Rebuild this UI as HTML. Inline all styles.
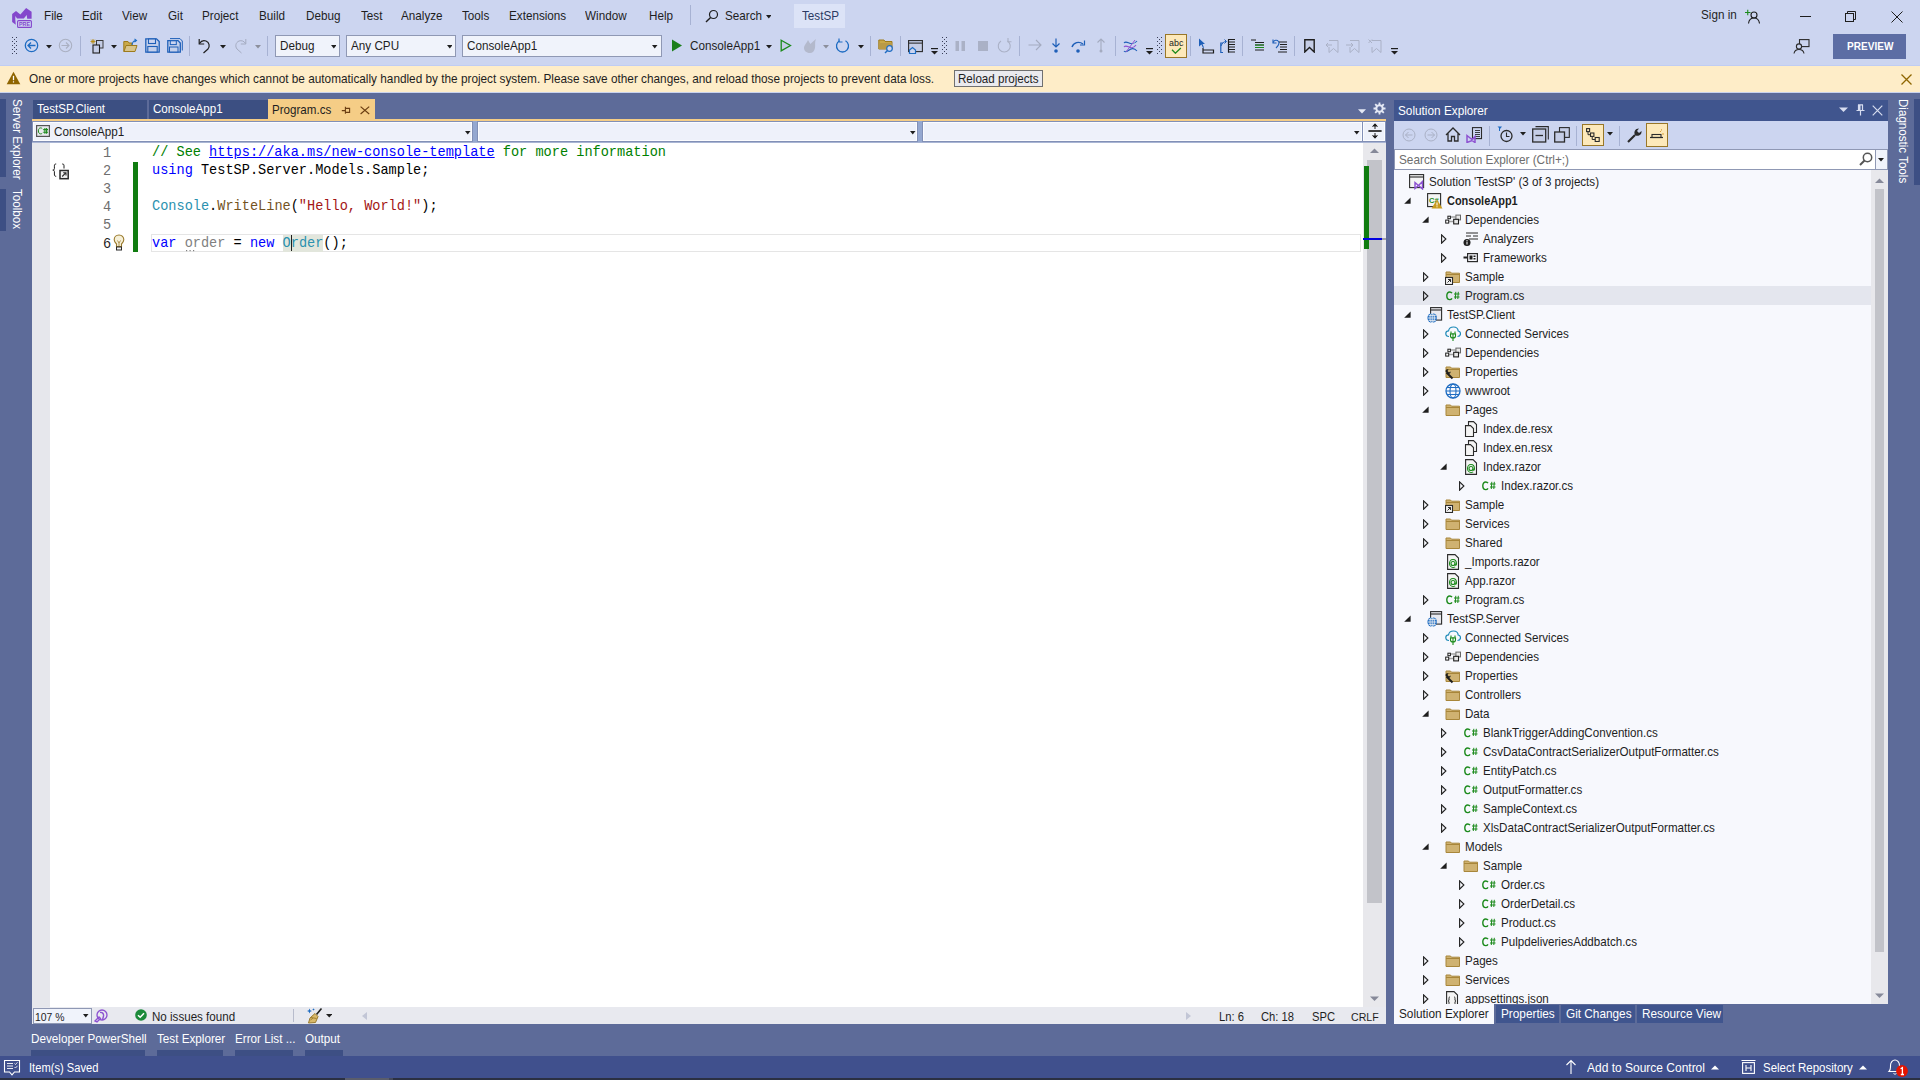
<!DOCTYPE html>
<html><head><meta charset="utf-8">
<style>
*{box-sizing:border-box;margin:0;padding:0}
html,body{width:1920px;height:1080px;overflow:hidden;background:#5d6b99;font-family:"Liberation Sans",sans-serif;font-size:11.6px;color:#1e1e1e}
.r{position:absolute;display:block}
.t{position:absolute;white-space:nowrap}
.code{position:absolute;white-space:pre;font-family:"Liberation Mono",monospace;font-size:14.6px;line-height:18px;transform-origin:0 0;transform:scaleX(0.9315)}
</style></head><body>

<div class="r" style="left:0px;top:0px;width:1920px;height:65px;background:#ccd5f0;"></div>
<div class="r" style="left:0px;top:65px;width:1920px;height:1px;background:#c0cdf3;"></div>
<svg class="r" style="left:12px;top:7px;" width="21" height="22" viewBox="0 0 21 22"><path d="M0.15 7.1L4 4L8.4 7.4L14.1 0.9L19.6 4.8V11.8H15.2L14.7 8.1L11.8 11.5H5.1L3.3 8.9V12.8L3.8 17.7L0.15 14.9Z" fill="#8447cc"/>
<rect x="5.6" y="13.6" width="13.8" height="6.8" rx="1" fill="#ccd5f0" stroke="#8447cc" stroke-width="1.1"/>
<text x="12.5" y="18.9" font-family="Liberation Sans" font-weight="bold" font-size="5.4" fill="#8447cc" text-anchor="middle">PRE</text></svg>
<div class="t" style="left:44.4px;top:7.5px;font-size:12.87px;line-height:16px;color:#1e1e1e;font-weight:normal;transform-origin:0 0;transform:scaleX(0.9091);">File</div>
<div class="t" style="left:82.1px;top:7.5px;font-size:12.87px;line-height:16px;color:#1e1e1e;font-weight:normal;transform-origin:0 0;transform:scaleX(0.9091);">Edit</div>
<div class="t" style="left:121.9px;top:7.5px;font-size:12.87px;line-height:16px;color:#1e1e1e;font-weight:normal;transform-origin:0 0;transform:scaleX(0.9091);">View</div>
<div class="t" style="left:167.5px;top:7.5px;font-size:12.87px;line-height:16px;color:#1e1e1e;font-weight:normal;transform-origin:0 0;transform:scaleX(0.9091);">Git</div>
<div class="t" style="left:202.2px;top:7.5px;font-size:12.87px;line-height:16px;color:#1e1e1e;font-weight:normal;transform-origin:0 0;transform:scaleX(0.9091);">Project</div>
<div class="t" style="left:259.2px;top:7.5px;font-size:12.87px;line-height:16px;color:#1e1e1e;font-weight:normal;transform-origin:0 0;transform:scaleX(0.9091);">Build</div>
<div class="t" style="left:306px;top:7.5px;font-size:12.87px;line-height:16px;color:#1e1e1e;font-weight:normal;transform-origin:0 0;transform:scaleX(0.9091);">Debug</div>
<div class="t" style="left:361.3px;top:7.5px;font-size:12.87px;line-height:16px;color:#1e1e1e;font-weight:normal;transform-origin:0 0;transform:scaleX(0.9091);">Test</div>
<div class="t" style="left:401.2px;top:7.5px;font-size:12.87px;line-height:16px;color:#1e1e1e;font-weight:normal;transform-origin:0 0;transform:scaleX(0.9091);">Analyze</div>
<div class="t" style="left:461.7px;top:7.5px;font-size:12.87px;line-height:16px;color:#1e1e1e;font-weight:normal;transform-origin:0 0;transform:scaleX(0.9091);">Tools</div>
<div class="t" style="left:509.2px;top:7.5px;font-size:12.87px;line-height:16px;color:#1e1e1e;font-weight:normal;transform-origin:0 0;transform:scaleX(0.9091);">Extensions</div>
<div class="t" style="left:585px;top:7.5px;font-size:12.87px;line-height:16px;color:#1e1e1e;font-weight:normal;transform-origin:0 0;transform:scaleX(0.9091);">Window</div>
<div class="t" style="left:649.4px;top:7.5px;font-size:12.87px;line-height:16px;color:#1e1e1e;font-weight:normal;transform-origin:0 0;transform:scaleX(0.9091);">Help</div>
<div class="r" style="left:690px;top:5px;width:1px;height:20px;background:#a7b2d3;"></div>
<svg class="r" style="left:705px;top:9px;" width="14" height="14" viewBox="0 0 14 14"><circle cx="8.5" cy="5.5" r="4" fill="none" stroke="#1e1e1e" stroke-width="1.2"/><path d="M5.6 8.4 L1 13" stroke="#1e1e1e" stroke-width="1.4"/></svg>
<div class="t" style="left:725px;top:7.5px;font-size:12.87px;line-height:16px;color:#1e1e1e;font-weight:normal;transform-origin:0 0;transform:scaleX(0.9091);">Search</div>
<svg class="r" style="left:765.5px;top:15px;" width="5.5" height="4" viewBox="0 0 5.5 4"><path d="M0 0H5.5L2.75 3.5Z" fill="#1e1e1e"/></svg>
<div class="r" style="left:794px;top:4px;width:51px;height:24px;background:#dce3f7;"></div>
<div class="t" style="left:802px;top:7.5px;font-size:12.87px;line-height:16px;color:#2b3a63;font-weight:normal;transform-origin:0 0;transform:scaleX(0.9091);">TestSP</div>
<div class="t" style="left:1701px;top:6.5px;font-size:12.87px;line-height:16px;color:#1e1e1e;font-weight:normal;transform-origin:0 0;transform:scaleX(0.9091);">Sign in</div>
<svg class="r" style="left:1745px;top:9px;" width="15" height="15" viewBox="0 0 15 15"><path d="M0 3.5H5.5M2.75 0.8V6.2" stroke="#1b8a1b" stroke-width="1.1"/><circle cx="9" cy="6" r="3" fill="none" stroke="#1e1e1e" stroke-width="1.1"/><path d="M3.5 14.5 C4 10.5 6 9 9 9 C12 9 14 10.5 14.5 14.5" fill="none" stroke="#1e1e1e" stroke-width="1.1"/></svg>
<div class="r" style="left:1800px;top:16px;width:11px;height:1px;background:#1e1e1e;"></div>
<svg class="r" style="left:1845px;top:11px;" width="12" height="12" viewBox="0 0 12 12"><rect x="0.5" y="2.5" width="8" height="8" fill="none" stroke="#1e1e1e"/><path d="M2.5 2.5V0.5H10.5V8.5H8.5" fill="none" stroke="#1e1e1e"/></svg>
<svg class="r" style="left:1891px;top:11px;" width="12" height="12" viewBox="0 0 12 12"><path d="M0.5 0.5L11.5 11.5M11.5 0.5L0.5 11.5" stroke="#1e1e1e" stroke-width="1"/></svg>
<svg class="r" style="left:12px;top:37px;" width="5" height="17" viewBox="0 0 5 17"><rect x="0" y="0" width="1" height="1" fill="#3a3f58"/><rect x="4" y="0" width="1" height="1" fill="#3a3f58"/><rect x="2" y="2" width="1" height="1" fill="#3a3f58"/><rect x="0" y="4" width="1" height="1" fill="#3a3f58"/><rect x="4" y="4" width="1" height="1" fill="#3a3f58"/><rect x="2" y="6" width="1" height="1" fill="#3a3f58"/><rect x="0" y="8" width="1" height="1" fill="#3a3f58"/><rect x="4" y="8" width="1" height="1" fill="#3a3f58"/><rect x="2" y="10" width="1" height="1" fill="#3a3f58"/><rect x="0" y="12" width="1" height="1" fill="#3a3f58"/><rect x="4" y="12" width="1" height="1" fill="#3a3f58"/><rect x="2" y="14" width="1" height="1" fill="#3a3f58"/><rect x="0" y="16" width="1" height="1" fill="#3a3f58"/><rect x="4" y="16" width="1" height="1" fill="#3a3f58"/></svg>
<svg class="r" style="left:24px;top:38px;" width="15" height="15" viewBox="0 0 15 15"><circle cx="7.5" cy="7.5" r="6.2" fill="none" stroke="#1e6cc2" stroke-width="1.3"/><path d="M4 7.5H11.5M7 4.5L4 7.5L7 10.5" fill="none" stroke="#1e6cc2" stroke-width="1.3"/></svg>
<svg class="r" style="left:46px;top:45px;" width="6" height="4" viewBox="0 0 6 4"><path d="M0 0H6L3.0 3.5Z" fill="#1e1e1e"/></svg>
<svg class="r" style="left:58px;top:38px;" width="15" height="15" viewBox="0 0 15 15"><circle cx="7.5" cy="7.5" r="6.2" fill="none" stroke="#aab0c2" stroke-width="1.1"/><path d="M3.5 7.5H11M8 4.5L11 7.5L8 10.5" fill="none" stroke="#aab0c2" stroke-width="1.1"/></svg>
<div class="r" style="left:80px;top:36px;width:1px;height:20px;background:#a7b2d3;"></div>
<svg class="r" style="left:89px;top:38px;" width="15" height="17" viewBox="0 0 15 17"><path d="M4 1V6M1.5 3.5H6.5M2.2 1.7L5.8 5.3M5.8 1.7L2.2 5.3" stroke="#b58a10" stroke-width="0.9"/><rect x="7.5" y="2.5" width="6.5" height="7.5" fill="#c5cde6" stroke="#3a3a3a"/><rect x="4" y="7" width="6.5" height="8" fill="#c5cde6" stroke="#1e1e1e" stroke-width="1.1"/></svg>
<svg class="r" style="left:111px;top:45px;" width="6" height="4" viewBox="0 0 6 4"><path d="M0 0H6L3.0 3.5Z" fill="#1e1e1e"/></svg>
<svg class="r" style="left:123px;top:38px;" width="15" height="15" viewBox="0 0 15 15"><path d="M0.8 3.5H5L6 5H9V13.5H0.8Z" fill="#c9a94a" stroke="#9d7b1c"/><path d="M1 13.5L3 7.5H14L12 13.5Z" fill="#d8c48a" stroke="#9d7b1c"/><path d="M9 7C9.5 4 11 2.5 13 2.5M11.5 0.8L13.5 2.5L11.5 4.2" fill="none" stroke="#1e6cc2" stroke-width="1.1"/></svg>
<svg class="r" style="left:145px;top:38px;" width="15" height="15" viewBox="0 0 15 15"><path d="M0.8 0.8H11.5L14.2 3.5V14.2H0.8Z" fill="#c5d0ea" stroke="#1e5fb8" stroke-width="1.3"/><rect x="3.5" y="1" width="7" height="4.5" fill="#ccd5f0" stroke="#1e5fb8" stroke-width="1.1"/><rect x="2.8" y="8.5" width="9.4" height="5.5" fill="#c5d0ea" stroke="#1e5fb8" stroke-width="1.1"/></svg>
<svg class="r" style="left:167px;top:38px;" width="16" height="15" viewBox="0 0 16 15"><path d="M3 0.6H13L15.3 3V12.5" fill="none" stroke="#1e5fb8" stroke-width="1"/><path d="M0.8 2.6H11L13.3 5V14.2H0.8Z" fill="#c5d0ea" stroke="#1e5fb8" stroke-width="1.3"/><rect x="3.3" y="2.8" width="6" height="3.8" fill="#ccd5f0" stroke="#1e5fb8" stroke-width="1"/><rect x="2.5" y="9" width="8.5" height="5" fill="#c5d0ea" stroke="#1e5fb8" stroke-width="1"/></svg>
<div class="r" style="left:189px;top:36px;width:1px;height:20px;background:#a7b2d3;"></div>
<svg class="r" style="left:198px;top:38px;" width="14" height="16" viewBox="0 0 14 16"><path d="M1.2 1V6H6.2" fill="none" stroke="#1e1e1e" stroke-width="1.2"/><path d="M1.5 5.5C3 3 5.5 2.2 8 3C11.5 4.5 12 8.5 10 11L5.5 15" fill="none" stroke="#1e1e1e" stroke-width="1.2"/></svg>
<svg class="r" style="left:220px;top:45px;" width="6" height="4" viewBox="0 0 6 4"><path d="M0 0H6L3.0 3.5Z" fill="#1e1e1e"/></svg>
<svg class="r" style="left:233px;top:38px;" width="14" height="16" viewBox="0 0 14 16"><path d="M12.8 1V6H7.8" fill="none" stroke="#a4abc0" stroke-width="1"/><path d="M12.5 5.5C11 3 8.5 2.2 6 3C2.5 4.5 2 8.5 4 11L8.5 15" fill="none" stroke="#a4abc0" stroke-width="1"/></svg>
<svg class="r" style="left:255px;top:45px;" width="6" height="4" viewBox="0 0 6 4"><path d="M0 0H6L3.0 3.5Z" fill="#8c8f9c"/></svg>
<div class="r" style="left:267px;top:36px;width:1px;height:20px;background:#a7b2d3;"></div>
<div class="r" style="left:275px;top:35px;width:65px;height:22px;background:#f0f3fb;border:1px solid #8f98b4"></div>
<div class="t" style="left:279.5px;top:38.0px;font-size:12.87px;line-height:16px;color:#1e1e1e;font-weight:normal;transform-origin:0 0;transform:scaleX(0.9091);">Debug</div>
<svg class="r" style="left:330.5px;top:44.5px;" width="5.5" height="4" viewBox="0 0 5.5 4"><path d="M0 0H5.5L2.75 3.5Z" fill="#1e1e1e"/></svg>
<div class="r" style="left:346px;top:35px;width:110px;height:22px;background:#f0f3fb;border:1px solid #8f98b4"></div>
<div class="t" style="left:350.5px;top:38.0px;font-size:12.87px;line-height:16px;color:#1e1e1e;font-weight:normal;transform-origin:0 0;transform:scaleX(0.9091);">Any CPU</div>
<svg class="r" style="left:446.5px;top:44.5px;" width="5.5" height="4" viewBox="0 0 5.5 4"><path d="M0 0H5.5L2.75 3.5Z" fill="#1e1e1e"/></svg>
<div class="r" style="left:462px;top:35px;width:199.5px;height:22px;background:#f0f3fb;border:1px solid #8f98b4"></div>
<div class="t" style="left:466.5px;top:38.0px;font-size:12.87px;line-height:16px;color:#1e1e1e;font-weight:normal;transform-origin:0 0;transform:scaleX(0.9091);">ConsoleApp1</div>
<svg class="r" style="left:652.0px;top:44.5px;" width="5.5" height="4" viewBox="0 0 5.5 4"><path d="M0 0H5.5L2.75 3.5Z" fill="#1e1e1e"/></svg>
<svg class="r" style="left:671px;top:39px;" width="12" height="13" viewBox="0 0 12 13"><path d="M1 0.5L11 6.5L1 12.5Z" fill="#1b7f1b"/></svg>
<div class="t" style="left:689.5px;top:38.0px;font-size:12.87px;line-height:16px;color:#1e1e1e;font-weight:normal;transform-origin:0 0;transform:scaleX(0.9091);">ConsoleApp1</div>
<svg class="r" style="left:766px;top:45px;" width="6" height="4" viewBox="0 0 6 4"><path d="M0 0H6L3.0 3.5Z" fill="#1e1e1e"/></svg>
<svg class="r" style="left:780px;top:39px;" width="12" height="13" viewBox="0 0 12 13"><path d="M1.2 1.2L10.5 6.5L1.2 11.8Z" fill="#c5cde6" stroke="#1b8a1b" stroke-width="1.3"/></svg>
<svg class="r" style="left:802px;top:38px;" width="15" height="16" viewBox="0 0 15 16"><path d="M8 15C4 15 2 12.5 2 10C2 7 5 5 6 2C7 4 8 5 8.5 6C10 4 12 3 14 1C12.5 4 13.5 7 13 10C12.5 13 10.5 15 8 15Z" fill="#b3b9cc"/></svg>
<svg class="r" style="left:823px;top:45px;" width="6" height="4" viewBox="0 0 6 4"><path d="M0 0H6L3.0 3.5Z" fill="#8c8f9c"/></svg>
<svg class="r" style="left:835px;top:38px;" width="16" height="16" viewBox="0 0 16 16"><path d="M10.5 2.8A6 6 0 1 1 4.5 2.8" fill="none" stroke="#1e6cc2" stroke-width="1.3"/><path d="M4 0.5V4H7.5" fill="none" stroke="#1e6cc2" stroke-width="1.2"/></svg>
<svg class="r" style="left:858px;top:45px;" width="6" height="4" viewBox="0 0 6 4"><path d="M0 0H6L3.0 3.5Z" fill="#1e1e1e"/></svg>
<div class="r" style="left:870px;top:36px;width:1px;height:20px;background:#a7b2d3;"></div>
<svg class="r" style="left:878px;top:38px;" width="17" height="16" viewBox="0 0 17 16"><path d="M0.8 2H6L7 3.5H14V11H0.8Z" fill="#c9a94a" stroke="#9d7b1c"/><rect x="1" y="5" width="13" height="6" fill="#b99a48"/><circle cx="11.5" cy="10.5" r="2.8" fill="#ccd5f0" stroke="#1e6cc2" stroke-width="1.2"/><path d="M9.5 12.5L7 15" stroke="#1e6cc2" stroke-width="1.4"/></svg>
<div class="r" style="left:900px;top:36px;width:1px;height:20px;background:#a7b2d3;"></div>
<svg class="r" style="left:908px;top:40px;" width="16" height="14" viewBox="0 0 16 14"><rect x="0.6" y="0.6" width="13.8" height="11" fill="#c5cde6" stroke="#2b2b2b" stroke-width="1.1"/><rect x="0.6" y="0.6" width="13.8" height="2.5" fill="#ccd5f0" stroke="#2b2b2b" stroke-width="1.1"/><path d="M1.5 13.5V10L4.5 7.5L7.5 10V13.5Z" fill="#ccd5f0" stroke="#1e6cc2" stroke-width="1.2"/></svg>
<svg class="r" style="left:930.5px;top:48px;" width="7" height="7" viewBox="0 0 7 7"><rect x="0" y="0" width="7" height="1.2" fill="#1e1e1e"/><path d="M0 3H7L3.5 6.5Z" fill="#1e1e1e"/></svg>
<svg class="r" style="left:942px;top:37px;" width="5" height="17" viewBox="0 0 5 17"><rect x="0" y="0" width="1" height="1" fill="#3a3f58"/><rect x="4" y="0" width="1" height="1" fill="#3a3f58"/><rect x="2" y="2" width="1" height="1" fill="#3a3f58"/><rect x="0" y="4" width="1" height="1" fill="#3a3f58"/><rect x="4" y="4" width="1" height="1" fill="#3a3f58"/><rect x="2" y="6" width="1" height="1" fill="#3a3f58"/><rect x="0" y="8" width="1" height="1" fill="#3a3f58"/><rect x="4" y="8" width="1" height="1" fill="#3a3f58"/><rect x="2" y="10" width="1" height="1" fill="#3a3f58"/><rect x="0" y="12" width="1" height="1" fill="#3a3f58"/><rect x="4" y="12" width="1" height="1" fill="#3a3f58"/><rect x="2" y="14" width="1" height="1" fill="#3a3f58"/><rect x="0" y="16" width="1" height="1" fill="#3a3f58"/><rect x="4" y="16" width="1" height="1" fill="#3a3f58"/></svg>
<svg class="r" style="left:955px;top:41px;" width="11" height="10" viewBox="0 0 11 10"><rect x="0.5" y="0" width="3.5" height="10" fill="#aab1c6"/><rect x="6.5" y="0" width="3.5" height="10" fill="#aab1c6"/></svg>
<div class="r" style="left:978px;top:41px;width:10px;height:10px;background:#aab1c6;"></div>
<svg class="r" style="left:997px;top:38px;" width="15" height="15" viewBox="0 0 15 15"><path d="M10.5 3A6 6 0 1 1 4 3" fill="none" stroke="#aab1c6" stroke-width="1.1"/><path d="M11 0V3.8H14.5" fill="none" stroke="#aab1c6" stroke-width="1.1"/></svg>
<div class="r" style="left:1019px;top:36px;width:1px;height:20px;background:#a7b2d3;"></div>
<svg class="r" style="left:1028px;top:39px;" width="14" height="12" viewBox="0 0 14 12"><path d="M0.5 6H13M8 1L13 6L8 11" fill="none" stroke="#a4abc0" stroke-width="1.1"/></svg>
<svg class="r" style="left:1051px;top:38px;" width="10" height="16" viewBox="0 0 10 16"><path d="M5 0.5V9M1.5 5.5L5 9L8.5 5.5" fill="none" stroke="#1e5fb8" stroke-width="1.2"/><circle cx="5" cy="13" r="1.8" fill="#1e5fb8"/></svg>
<svg class="r" style="left:1071px;top:39px;" width="15" height="15" viewBox="0 0 15 15"><path d="M1 8C2.5 3.5 8 2 12 5" fill="none" stroke="#1e5fb8" stroke-width="1.4"/><path d="M13.5 1.5V6H9" fill="none" stroke="#1e5fb8" stroke-width="1.2"/><circle cx="7" cy="12" r="1.8" fill="#1e5fb8"/></svg>
<svg class="r" style="left:1096px;top:38px;" width="10" height="16" viewBox="0 0 10 16"><path d="M5 13V1M1.5 4.5L5 1L8.5 4.5" fill="none" stroke="#a4abc0" stroke-width="1.1"/><circle cx="5" cy="13" r="1.5" fill="#a4abc0"/></svg>
<div class="r" style="left:1115px;top:36px;width:1px;height:20px;background:#a7b2d3;"></div>
<svg class="r" style="left:1123px;top:39px;" width="15" height="14" viewBox="0 0 15 14"><path d="M1 4C4 0 8 9 14 2M1 12C4 16 8 5 14 12" fill="none" stroke="#1e5fb8" stroke-width="1.1"/><path d="M1 8C4 4 8 13 13 6" fill="none" stroke="#8d52d1" stroke-width="1.1"/><path d="M3 13L12 1" stroke="#8d52d1" stroke-width="1"/></svg>
<svg class="r" style="left:1146px;top:48px;" width="7" height="7" viewBox="0 0 7 7"><rect x="0" y="0" width="7" height="1.2" fill="#1e1e1e"/><path d="M0 3H7L3.5 6.5Z" fill="#1e1e1e"/></svg>
<svg class="r" style="left:1157px;top:37px;" width="5" height="17" viewBox="0 0 5 17"><rect x="0" y="0" width="1" height="1" fill="#3a3f58"/><rect x="4" y="0" width="1" height="1" fill="#3a3f58"/><rect x="2" y="2" width="1" height="1" fill="#3a3f58"/><rect x="0" y="4" width="1" height="1" fill="#3a3f58"/><rect x="4" y="4" width="1" height="1" fill="#3a3f58"/><rect x="2" y="6" width="1" height="1" fill="#3a3f58"/><rect x="0" y="8" width="1" height="1" fill="#3a3f58"/><rect x="4" y="8" width="1" height="1" fill="#3a3f58"/><rect x="2" y="10" width="1" height="1" fill="#3a3f58"/><rect x="0" y="12" width="1" height="1" fill="#3a3f58"/><rect x="4" y="12" width="1" height="1" fill="#3a3f58"/><rect x="2" y="14" width="1" height="1" fill="#3a3f58"/><rect x="0" y="16" width="1" height="1" fill="#3a3f58"/><rect x="4" y="16" width="1" height="1" fill="#3a3f58"/></svg>
<div class="r" style="left:1165px;top:34px;width:22px;height:24px;background:#fde9ba;border:1px solid #997728"></div>
<div class="t" style="left:1168.5px;top:34.5px;font-size:9.79px;line-height:16px;color:#1e1e1e;font-weight:normal;transform-origin:0 0;transform:scaleX(0.9091);">abc</div>
<svg class="r" style="left:1170px;top:46.5px;" width="12" height="7" viewBox="0 0 12 7"><path d="M2 2.8L5.4 6.2L10.8 1" fill="none" stroke="#1b8a1b" stroke-width="1.3"/></svg>
<div class="r" style="left:1190px;top:36px;width:1px;height:20px;background:#a7b2d3;"></div>
<svg class="r" style="left:1198px;top:38px;" width="17" height="16" viewBox="0 0 17 16"><path d="M1 0.5L7 6H4.5L6 9.5L5 10L3.5 6.5L1 8.5Z" fill="#1e5fb8"/><path d="M5 10V13M5 12H15.5V15H5Z" fill="none" stroke="#1e1e1e" stroke-width="1.2"/></svg>
<svg class="r" style="left:1220px;top:38px;" width="16" height="16" viewBox="0 0 16 16"><path d="M3 5H0.8V14.5H3" fill="none" stroke="#1e5fb8" stroke-width="1.2"/><path d="M1 8C2 5 4 3.5 6 3.5M4.5 1.5L6.5 3.5L4.5 5.5" fill="none" stroke="#1e5fb8" stroke-width="1"/><path d="M8 1.5H15M9 4H15M9 6.5H15M9 9H15M9 11.5H15M8 14H15" stroke="#1e1e1e" stroke-width="1"/><path d="M8.5 1.5V14.5" stroke="#1e1e1e" stroke-width="1.2"/></svg>
<div class="r" style="left:1242px;top:36px;width:1px;height:20px;background:#a7b2d3;"></div>
<svg class="r" style="left:1251px;top:39px;" width="14" height="13" viewBox="0 0 14 13"><path d="M0 1H5M4 3.5H13M4 6H13M4 8.5H13M4 11H13" stroke="#1e1e1e" stroke-width="1"/><path d="M4 6H13M4 8.5H13" stroke="#1b8a1b" stroke-width="1.1"/></svg>
<svg class="r" style="left:1271px;top:38px;" width="17" height="15" viewBox="0 0 17 15"><path d="M2 1.5V5H5.5" fill="none" stroke="#1e5fb8" stroke-width="1.1"/><path d="M2.2 4.5C3 2 6 1.5 7.5 3.5C9 5.5 7 8 5 10" fill="none" stroke="#1e5fb8" stroke-width="1.1"/><path d="M8 4H16M9 6.5H16M9 9H16M9 11.5H16M7 14H16" stroke="#1e1e1e" stroke-width="1"/></svg>
<div class="r" style="left:1294px;top:36px;width:1px;height:20px;background:#a7b2d3;"></div>
<svg class="r" style="left:1304px;top:39px;" width="11" height="14" viewBox="0 0 11 14"><path d="M0.8 0.8H10.2V13L5.5 8.5L0.8 13Z" fill="#c5cde6" stroke="#1e1e1e" stroke-width="1.4"/></svg>
<svg class="r" style="left:1325px;top:39px;" width="14" height="14" viewBox="0 0 14 14"><path d="M4 1.5H13V13.5L8.5 9.5L4 13.5V8" fill="none" stroke="#aab1c6" stroke-width="1"/><path d="M1 6H7M3 4L1 6L3 8" fill="none" stroke="#aab1c6" stroke-width="1"/></svg>
<svg class="r" style="left:1346px;top:39px;" width="14" height="14" viewBox="0 0 14 14"><path d="M4 1.5H13V13.5L8.5 9.5L4 13.5V8" fill="none" stroke="#aab1c6" stroke-width="1"/><path d="M0 6H7M5 4L7 6L5 8" fill="none" stroke="#aab1c6" stroke-width="1"/></svg>
<svg class="r" style="left:1368px;top:39px;" width="14" height="14" viewBox="0 0 14 14"><path d="M4 1.5H13V13.5L8.5 9.5L4 13.5V8" fill="none" stroke="#aab1c6" stroke-width="1"/><path d="M0.5 0.5L4 4M4 0.5L0.5 4" stroke="#aab1c6" stroke-width="1"/></svg>
<svg class="r" style="left:1390.5px;top:48px;" width="7" height="7" viewBox="0 0 7 7"><rect x="0" y="0" width="7" height="1.2" fill="#1e1e1e"/><path d="M0 3H7L3.5 6.5Z" fill="#1e1e1e"/></svg>
<svg class="r" style="left:1793px;top:39px;" width="17" height="15" viewBox="0 0 17 15"><rect x="6.5" y="0.6" width="9.5" height="7" fill="none" stroke="#2b2b2b" stroke-width="1.1"/><circle cx="6" cy="7.5" r="2.6" fill="#ccd5f0" stroke="#2b2b2b" stroke-width="1.1"/><path d="M1 14.5C1.5 11.5 3.5 10.5 6 10.5C8.5 10.5 10.5 11.5 11 14.5" fill="none" stroke="#2b2b2b" stroke-width="1.1"/></svg>
<div class="r" style="left:1833px;top:34px;width:73px;height:25px;background:#5c6da4;"></div>
<div class="t" style="left:1846.5px;top:38.0px;font-size:11.07px;line-height:16px;color:#ffffff;font-weight:bold;transform-origin:0 0;transform:scaleX(0.9091);">PREVIEW</div>
<div class="r" style="left:0px;top:66px;width:1920px;height:26px;background:#feedc8;"></div>
<div class="r" style="left:0px;top:92px;width:1920px;height:1px;background:#c9d3ee;"></div>
<svg class="r" style="left:6px;top:71px;" width="15" height="14" viewBox="0 0 15 14"><path d="M7.5 0.8L14.3 13.2H0.7Z" fill="#8f6500"/><path d="M7.5 4.8V9.2" stroke="#ffffff" stroke-width="1.3"/><rect x="6.9" y="10.3" width="1.2" height="1.2" fill="#ffffff"/></svg>
<div class="t" style="left:28.5px;top:70.5px;font-size:12.98px;line-height:16px;color:#1e1e1e;font-weight:normal;transform-origin:0 0;transform:scaleX(0.9091);">One or more projects have changes which cannot be automatically handled by the project system. Please save other changes, and reload those projects to prevent data loss.</div>
<div class="r" style="left:954px;top:70px;width:89px;height:17px;background:#eaeaee;border:1px solid #707070"></div>
<div class="t" style="left:958px;top:70.5px;font-size:12.76px;line-height:16px;color:#1e1e1e;font-weight:normal;transform-origin:0 0;transform:scaleX(0.9091);">Reload projects</div>
<svg class="r" style="left:1901px;top:74px;" width="11" height="11" viewBox="0 0 11 11"><path d="M0.5 0.5L10.5 10.5M10.5 0.5L0.5 10.5" stroke="#8f6500" stroke-width="1.3"/></svg>
<div class="r" style="left:0px;top:99px;width:6px;height:78px;background:#3d4f84;"></div>
<div class="r" style="left:0px;top:189px;width:6px;height:42px;background:#3d4f84;"></div>
<div class="t" style="left:10px;top:99px;font-size:12.76px;line-height:14px;color:#ffffff;transform-origin:0 0;transform:translateX(14px) rotate(90deg) scaleX(0.9091)">Server Explorer</div>
<div class="t" style="left:10px;top:189px;font-size:12.76px;line-height:14px;color:#ffffff;transform-origin:0 0;transform:translateX(14px) rotate(90deg) scaleX(0.9091)">Toolbox</div>
<div class="t" style="left:1896px;top:99px;font-size:12.76px;line-height:14px;color:#ffffff;transform-origin:0 0;transform:translateX(14px) rotate(90deg) scaleX(0.9091)">Diagnostic Tools</div>
<div class="r" style="left:1914px;top:99px;width:6px;height:86px;background:#3d4f84;"></div>
<div class="r" style="left:32.5px;top:100px;width:114.5px;height:18.5px;background:#3c4f82;"></div>
<div class="t" style="left:37px;top:100.5px;font-size:12.76px;line-height:16px;color:#ffffff;font-weight:normal;transform-origin:0 0;transform:scaleX(0.9091);">TestSP.Client</div>
<div class="r" style="left:149px;top:100px;width:118.5px;height:18.5px;background:#3c4f82;"></div>
<div class="t" style="left:153px;top:100.5px;font-size:12.76px;line-height:16px;color:#ffffff;font-weight:normal;transform-origin:0 0;transform:scaleX(0.9091);">ConsoleApp1</div>
<div class="r" style="left:268px;top:99px;width:107px;height:20px;background:#f5cd86;"></div>
<div class="t" style="left:272px;top:102.0px;font-size:12.76px;line-height:16px;color:#1e1e1e;font-weight:normal;transform-origin:0 0;transform:scaleX(0.9091);">Program.cs</div>
<svg class="r" style="left:341px;top:106px;" width="10" height="9" viewBox="0 0 10 9"><path d="M0.8 4.6H4.4M4.4 0.8V7.8M4.4 2.4H8.6V6.4H4.4" fill="none" stroke="#6b3e12" stroke-width="1.1"/></svg>
<svg class="r" style="left:360px;top:105.5px;" width="10" height="9" viewBox="0 0 10 9"><path d="M0.6 0.6L9.2 8M9.2 0.6L0.6 8" stroke="#6b3e12" stroke-width="1.2"/></svg>
<svg class="r" style="left:1358px;top:108.5px;" width="8" height="5" viewBox="0 0 8 5"><path d="M0 0.3H8L4 4.5Z" fill="#e5e9f5"/></svg>
<svg class="r" style="left:1373px;top:102px;" width="13" height="13" viewBox="0 0 13 13"><circle cx="6.5" cy="6.5" r="3.2" fill="none" stroke="#e5e9f5" stroke-width="2"/><path d="M6.5 0.5V3M6.5 10V12.5M0.5 6.5H3M10 6.5H12.5M2.2 2.2L4 4M9 9L10.8 10.8M2.2 10.8L4 9M9 4L10.8 2.2" stroke="#e5e9f5" stroke-width="1.8"/></svg>
<div class="r" style="left:32px;top:119px;width:1354px;height:2px;background:#f5cd86;"></div>
<div class="r" style="left:32px;top:121px;width:1354px;height:22px;background:#a9b5d4;"></div>
<div class="r" style="left:32px;top:121px;width:441px;height:21px;background:#eef1fa;border:1px solid #8290b6;box-shadow:inset 0 0 0 1px #fbfcff"></div>
<div class="r" style="left:477px;top:121px;width:441px;height:21px;background:#eef1fa;border:1px solid #8290b6;box-shadow:inset 0 0 0 1px #fbfcff"></div>
<div class="r" style="left:922px;top:121px;width:441px;height:21px;background:#eef1fa;border:1px solid #8290b6;box-shadow:inset 0 0 0 1px #fbfcff"></div>
<div class="r" style="left:473px;top:121px;width:4px;height:21px;background:#95a8d0;"></div>
<div class="r" style="left:918px;top:121px;width:4px;height:21px;background:#95a8d0;"></div>
<div class="r" style="left:1363px;top:121px;width:23px;height:21px;background:#eef1fa;border:1px solid #8290b6;border-left:none;box-shadow:inset 0 0 0 1px #fbfcff"></div>
<svg class="r" style="left:36px;top:125px;" width="14" height="12" viewBox="0 0 14 12"><rect x="0.6" y="0.6" width="12.8" height="10.8" fill="#e9e9ef" stroke="#555" stroke-width="1.2"/><path d="M6.2 3.6C5.8 3.1 5.2 2.9 4.6 2.9C3.2 2.9 2.4 4.1 2.4 5.9C2.4 7.7 3.2 8.9 4.6 8.9C5.2 8.9 5.8 8.7 6.2 8.2" fill="none" stroke="#1b8a1b" stroke-width="1"/><path d="M7.2 4.6H12M7.2 7.3H12M8.9 3V8.8M10.6 3V8.8" stroke="#1b8a1b" stroke-width="1.05"/></svg>
<div class="t" style="left:53.5px;top:123.5px;font-size:12.87px;line-height:16px;color:#1e1e1e;font-weight:normal;transform-origin:0 0;transform:scaleX(0.9091);">ConsoleApp1</div>
<svg class="r" style="left:465px;top:131px;" width="5.5" height="4" viewBox="0 0 5.5 4"><path d="M0 0H5.5L2.75 3.5Z" fill="#1e1e1e"/></svg>
<svg class="r" style="left:910px;top:131px;" width="5.5" height="4" viewBox="0 0 5.5 4"><path d="M0 0H5.5L2.75 3.5Z" fill="#1e1e1e"/></svg>
<svg class="r" style="left:1354px;top:131px;" width="5.5" height="4" viewBox="0 0 5.5 4"><path d="M0 0H5.5L2.75 3.5Z" fill="#1e1e1e"/></svg>
<svg class="r" style="left:1368px;top:123px;" width="14" height="16" viewBox="0 0 14 16"><path d="M0.5 8H13.5" stroke="#1e1e1e" stroke-width="1.2"/><path d="M7 1V6M7 10V15" stroke="#1e1e1e" stroke-width="1"/><path d="M4.5 3.5L7 0.8L9.5 3.5M4.5 12.5L7 15.2L9.5 12.5" fill="#1e1e1e" stroke="#1e1e1e"/><path d="M0.5 8H13.5" stroke="#1e1e1e" stroke-width="1.2"/></svg>
<div class="r" style="left:32px;top:143px;width:1331px;height:864px;background:#ffffff;"></div>
<div class="r" style="left:32px;top:143px;width:18px;height:864px;background:#e6e7ec;"></div>
<div class="r" style="left:1363px;top:143px;width:23px;height:864px;background:#e8e8ec;"></div>
<svg class="r" style="left:1370px;top:148px;" width="9" height="6" viewBox="0 0 9 6"><path d="M0 5H9L4.5 0.5Z" fill="#868999"/></svg>
<div class="r" style="left:1367px;top:160px;width:15px;height:743px;background:#c2c3c9;"></div>
<svg class="r" style="left:1370px;top:996px;" width="9" height="6" viewBox="0 0 9 6"><path d="M0 0.5H9L4.5 5Z" fill="#868999"/></svg>
<div class="r" style="left:1364px;top:166px;width:4.5px;height:83px;background:#107c10;"></div>
<div class="r" style="left:1363px;top:238px;width:23px;height:2px;background:#0000e0;"></div>
<div class="r" style="left:1382px;top:238px;width:4px;height:2px;background:#a0a0a8;"></div>
<svg class="r" style="left:52px;top:163px;" width="18" height="18" viewBox="0 0 18 18"><path d="M4.2 1C2.6 1 2.4 1.6 2.4 3.2V5.6C2.4 6.6 1.9 7.1 0.8 7.1C1.9 7.1 2.4 7.6 2.4 8.6V11C2.4 12.6 2.6 13.3 4.2 13.3" fill="none" stroke="#1e1e1e" stroke-width="1"/><path d="M10.2 1C11.6 1 12 1.4 12 2.8V5.5" fill="none" stroke="#1e1e1e" stroke-width="1"/><rect x="8" y="7.5" width="8.2" height="8.2" fill="#f2f2f2" stroke="#2b2b2b" stroke-width="1.5"/><path d="M10.2 13.5L14 9.7M11.2 9.7H14V12.5" fill="none" stroke="#2b2b2b" stroke-width="1.1"/></svg>
<div class="code" style="left:100px;top:144.0px;width:12px;text-align:right;color:#6e6e6e">1</div>
<div class="code" style="left:100px;top:162.0px;width:12px;text-align:right;color:#6e6e6e">2</div>
<div class="code" style="left:100px;top:180.0px;width:12px;text-align:right;color:#6e6e6e">3</div>
<div class="code" style="left:100px;top:197.5px;width:12px;text-align:right;color:#6e6e6e">4</div>
<div class="code" style="left:100px;top:216.0px;width:12px;text-align:right;color:#6e6e6e">5</div>
<div class="code" style="left:100px;top:235.0px;width:12px;text-align:right;color:#1e1e1e">6</div>
<div class="r" style="left:133px;top:162px;width:5px;height:90px;background:#107c10;"></div>
<div class="r" style="left:151px;top:233.5px;width:1210px;height:18.5px;background:transparent;border:1.5px solid #e5e5e5"></div>
<svg class="r" style="left:113px;top:234px;" width="12" height="17" viewBox="0 0 12 17"><path d="M6 1C3 1 1.2 3.2 1.2 5.7C1.2 7.6 2.5 9 3.5 10V12.5H8.5V10C9.5 9 10.8 7.6 10.8 5.7C10.8 3.2 9 1 6 1Z" fill="#f6f0d8" stroke="#9a7a2c" stroke-width="1.1"/><path d="M4.5 6.5L6 9V12M7.5 6.5L6 9" fill="none" stroke="#9a7a2c" stroke-width="0.8"/><rect x="3.5" y="13" width="5" height="3" fill="#f4f4f4" stroke="#2b2b2b" stroke-width="1"/></svg>
<div class="r" style="left:282.5px;top:234.5px;width:40.5px;height:17px;background:#e2e6dc;"></div>
<div class="r" style="left:290.5px;top:235px;width:1.2px;height:16px;background:#1e1e1e;"></div>
<div class="code" style="left:151.5px;top:143.0px;color:#000000"><span style="color:#008000">// See </span><span style="color:#0000ff;text-decoration:underline">https://aka.ms/new-console-template</span><span style="color:#008000"> for more information</span></div>
<div class="code" style="left:151.5px;top:161.0px;color:#000000"><span style="color:#0000ff">using</span> TestSP.Server.Models.Sample;</div>
<div class="code" style="left:151.5px;top:179.0px;color:#000000"></div>
<div class="code" style="left:151.5px;top:197.0px;color:#000000"><span style="color:#2b91af">Console</span>.<span style="color:#74531f">WriteLine</span>(<span style="color:#a31515">"Hello, World!"</span>);</div>
<div class="code" style="left:151.5px;top:215.5px;color:#000000"></div>
<div class="code" style="left:151.5px;top:233.5px;color:#000000"><span style="color:#0000ff">var</span> <span style="color:#808080">order</span> = <span style="color:#0000ff">new</span> <span style="color:#2b91af">Order</span>();</div>
<svg class="r" style="left:186px;top:250px;" width="12" height="2" viewBox="0 0 12 2"><rect x="0" y="0" width="1.2" height="1.2" fill="#808080"/><rect x="3.5" y="0" width="1.2" height="1.2" fill="#808080"/><rect x="7" y="0" width="1.2" height="1.2" fill="#808080"/></svg>
<div class="r" style="left:32px;top:1007px;width:1331px;height:17px;background:#e8e9ef;"></div>
<div class="r" style="left:1363px;top:1007px;width:23px;height:17px;background:#e8e9ef;"></div>
<div class="r" style="left:32.5px;top:1007.5px;width:59px;height:16px;background:#f0f3fb;border:1px solid #8f98b4"></div>
<div class="t" style="left:35px;top:1008.5px;font-size:11.44px;line-height:16px;color:#1e1e1e;font-weight:normal;transform-origin:0 0;transform:scaleX(0.9091);">107 %</div>
<svg class="r" style="left:83px;top:1014px;" width="5.5" height="4" viewBox="0 0 5.5 4"><path d="M0 0H5.5L2.75 3.5Z" fill="#1e1e1e"/></svg>
<svg class="r" style="left:94px;top:1009px;" width="14" height="14" viewBox="0 0 14 14"><circle cx="8" cy="6" r="5" fill="none" stroke="#8d52d1" stroke-width="1.3"/><path d="M6 3.5C8 3 10 4.5 9.5 7L8.5 11M1 12L5 8L6.5 9.5L3 13Z" fill="none" stroke="#8d52d1" stroke-width="1.4"/></svg>
<svg class="r" style="left:134.5px;top:1009px;" width="12" height="12" viewBox="0 0 12 12"><circle cx="6" cy="6" r="5.8" fill="#1b8a3a"/><path d="M3 6.2L5.2 8.3L9 4.2" fill="none" stroke="#ffffff" stroke-width="1.5"/></svg>
<div class="t" style="left:151.5px;top:1008.5px;font-size:12.76px;line-height:16px;color:#1e1e1e;font-weight:normal;transform-origin:0 0;transform:scaleX(0.9091);">No issues found</div>
<div class="r" style="left:293px;top:1009px;width:1px;height:13px;background:#b8bccc;"></div>
<svg class="r" style="left:306px;top:1007px;" width="17" height="17" viewBox="0 0 17 17"><path d="M3.5 1.5L4.2 3.3L6 4L4.2 4.7L3.5 6.5L2.8 4.7L1 4L2.8 3.3Z" fill="#1e6cc2"/><path d="M7.5 1.2L7.9 2.1L8.8 2.5L7.9 2.9L7.5 3.8L7.1 2.9L6.2 2.5L7.1 2.1Z" fill="#1e6cc2"/><path d="M15.5 1.5L10.5 7.5" stroke="#1e1e1e" stroke-width="1.6"/><path d="M9 6.5L12 9.5L9.5 15.5L2.5 16L4 11Z" fill="#d9b96a" stroke="#9a7a2c" stroke-width="1"/><path d="M5 10.5L10.5 11.5M4.5 13L7 11" stroke="#9a7a2c" stroke-width="0.9"/></svg>
<svg class="r" style="left:325.5px;top:1014px;" width="6.5" height="4" viewBox="0 0 6.5 4"><path d="M0 0H6.5L3.25 3.5Z" fill="#1e1e1e"/></svg>
<svg class="r" style="left:362px;top:1012px;" width="5" height="8" viewBox="0 0 5 8"><path d="M5 0V8L0 4Z" fill="#c2c6d6"/></svg>
<svg class="r" style="left:1186px;top:1012px;" width="5" height="8" viewBox="0 0 5 8"><path d="M0 0V8L5 4Z" fill="#c2c6d6"/></svg>
<div class="t" style="left:1219px;top:1008.5px;font-size:12.32px;line-height:16px;color:#1e1e1e;font-weight:normal;transform-origin:0 0;transform:scaleX(0.9091);">Ln: 6</div>
<div class="t" style="left:1261px;top:1008.5px;font-size:12.32px;line-height:16px;color:#1e1e1e;font-weight:normal;transform-origin:0 0;transform:scaleX(0.9091);">Ch: 18</div>
<div class="t" style="left:1312px;top:1008.5px;font-size:12.32px;line-height:16px;color:#1e1e1e;font-weight:normal;transform-origin:0 0;transform:scaleX(0.9091);">SPC</div>
<div class="t" style="left:1351px;top:1008.5px;font-size:11.66px;line-height:16px;color:#1e1e1e;font-weight:normal;transform-origin:0 0;transform:scaleX(0.9091);">CRLF</div>
<div class="t" style="left:31px;top:1030.5px;font-size:12.87px;line-height:16px;color:#ffffff;font-weight:normal;transform-origin:0 0;transform:scaleX(0.9091);">Developer PowerShell</div>
<div class="r" style="left:31px;top:1050px;width:114px;height:6px;background:#3d4f84;"></div>
<div class="t" style="left:157px;top:1030.5px;font-size:12.87px;line-height:16px;color:#ffffff;font-weight:normal;transform-origin:0 0;transform:scaleX(0.9091);">Test Explorer</div>
<div class="r" style="left:157px;top:1050px;width:66px;height:6px;background:#3d4f84;"></div>
<div class="t" style="left:235px;top:1030.5px;font-size:12.87px;line-height:16px;color:#ffffff;font-weight:normal;transform-origin:0 0;transform:scaleX(0.9091);">Error List ...</div>
<div class="r" style="left:235px;top:1050px;width:58px;height:6px;background:#3d4f84;"></div>
<div class="t" style="left:305px;top:1030.5px;font-size:12.87px;line-height:16px;color:#ffffff;font-weight:normal;transform-origin:0 0;transform:scaleX(0.9091);">Output</div>
<div class="r" style="left:305px;top:1050px;width:38px;height:6px;background:#3d4f84;"></div>
<div class="r" style="left:1394px;top:100px;width:494px;height:21px;background:#40558e;"></div>
<div class="t" style="left:1398px;top:103.0px;font-size:12.98px;line-height:16px;color:#ffffff;font-weight:normal;transform-origin:0 0;transform:scaleX(0.9091);">Solution Explorer</div>
<svg class="r" style="left:1839px;top:107px;" width="9" height="6" viewBox="0 0 9 6"><path d="M0 0.5H9L4.5 5Z" fill="#d7ddf0"/></svg>
<svg class="r" style="left:1856px;top:104px;" width="9" height="12" viewBox="0 0 9 12"><path d="M2 0.8H7M2.5 0.8V6M6.5 0.8V6M0.5 6.5H8.5M4.5 6.5V11.5" fill="none" stroke="#d7ddf0" stroke-width="1.2"/><rect x="2.5" y="1" width="2" height="5" fill="#d7ddf0"/></svg>
<svg class="r" style="left:1872px;top:104.5px;" width="11" height="11" viewBox="0 0 11 11"><path d="M0.7 0.7L10.3 10.3M10.3 0.7L0.7 10.3" stroke="#d7ddf0" stroke-width="1.2"/></svg>
<div class="r" style="left:1394px;top:121px;width:494px;height:28px;background:#ccd5f0;"></div>
<svg class="r" style="left:1402px;top:128px;" width="14" height="14" viewBox="0 0 14 14"><circle cx="7" cy="7" r="6" fill="none" stroke="#aab1c6" stroke-width="1"/><path d="M3.5 7H10.5M6.5 4L3.5 7L6.5 10" fill="none" stroke="#aab1c6" stroke-width="1"/></svg>
<svg class="r" style="left:1424px;top:128px;" width="14" height="14" viewBox="0 0 14 14"><circle cx="7" cy="7" r="6" fill="none" stroke="#aab1c6" stroke-width="1"/><path d="M3.5 7H10.5M7.5 4L10.5 7L7.5 10" fill="none" stroke="#aab1c6" stroke-width="1"/></svg>
<svg class="r" style="left:1445px;top:127px;" width="16" height="15" viewBox="0 0 16 15"><path d="M1 8L8 1L15 8M3 6.5V14H6.5V9.5H9.5V14H13V6.5" fill="none" stroke="#2b2b2b" stroke-width="1.3"/></svg>
<svg class="r" style="left:1466px;top:127px;" width="17" height="16" viewBox="0 0 17 16"><rect x="6.5" y="0.6" width="9" height="11" fill="#ccd5f0" stroke="#2b2b2b" stroke-width="1.1"/><path d="M9 3.5H14M9 5.5H14M9 7.5H14M9 9.5H14" stroke="#2b2b2b" stroke-width="0.9"/><path d="M1 8.5L6 12.5L9 9.5V15.5L6 13.5L1 15.5Z" fill="none" stroke="#8d52d1" stroke-width="1.5"/></svg>
<div class="r" style="left:1489px;top:126px;width:1px;height:20px;background:#a7b2d3;"></div>
<svg class="r" style="left:1497px;top:126px;" width="16" height="17" viewBox="0 0 16 17"><path d="M0.5 0.5H5L3 3Z" fill="#1e6cc2"/><path d="M2.5 2V5" stroke="#1e6cc2" stroke-width="1"/><circle cx="9.5" cy="10" r="5.5" fill="#ccd5f0" stroke="#2b2b2b" stroke-width="1.3"/><path d="M9.5 6.5V10.5H12.5" fill="none" stroke="#2b2b2b" stroke-width="1.1"/></svg>
<svg class="r" style="left:1520px;top:132px;" width="6" height="4" viewBox="0 0 6 4"><path d="M0 0H6L3 3.5Z" fill="#1e1e1e"/></svg>
<svg class="r" style="left:1532px;top:126px;" width="17" height="17" viewBox="0 0 17 17"><path d="M3.5 0.6H16.3V13.5" fill="none" stroke="#2b2b2b" stroke-width="1.1"/><rect x="0.7" y="3" width="13" height="13" fill="#c5cde6" stroke="#2b2b2b" stroke-width="1.3"/><path d="M3.5 9.5H11" stroke="#2b2b2b" stroke-width="1.3"/></svg>
<svg class="r" style="left:1554px;top:127px;" width="16" height="16" viewBox="0 0 16 16"><rect x="5.5" y="0.6" width="9.8" height="9.8" fill="#c5cde6" stroke="#2b2b2b" stroke-width="1.1"/><rect x="0.7" y="5" width="9.8" height="10" fill="#c5cde6" stroke="#2b2b2b" stroke-width="1.3"/></svg>
<div class="r" style="left:1576px;top:126px;width:1px;height:20px;background:#a7b2d3;"></div>
<div class="r" style="left:1582px;top:124px;width:22px;height:22px;background:#fde9ba;border:1px solid #997728"></div>
<svg class="r" style="left:1586px;top:128px;" width="14" height="14" viewBox="0 0 14 14"><rect x="0.6" y="0.6" width="3" height="3" fill="none" stroke="#2b2b2b" stroke-width="1.1"/><rect x="4.5" y="5" width="3.4" height="3.4" fill="none" stroke="#2b2b2b" stroke-width="1.1"/><rect x="9.2" y="9.5" width="4" height="4" fill="none" stroke="#2b2b2b" stroke-width="1.1"/><path d="M2 3.6V6.7H4.5M6.2 8.4V11.5H9.2" fill="none" stroke="#2b2b2b" stroke-width="1"/></svg>
<svg class="r" style="left:1607px;top:132px;" width="6" height="4" viewBox="0 0 6 4"><path d="M0 0H6L3 3.5Z" fill="#1e1e1e"/></svg>
<div class="r" style="left:1619px;top:126px;width:1px;height:20px;background:#a7b2d3;"></div>
<svg class="r" style="left:1627px;top:127px;" width="16" height="16" viewBox="0 0 16 16"><path d="M1 15L8 8" stroke="#2b2b2b" stroke-width="2.2"/><path d="M8 8C6.5 5 8 1.5 12 1.5L10 4L12 6L14.5 4C15 8 11.5 9.5 8.5 8.5" fill="#2b2b2b"/></svg>
<div class="r" style="left:1646px;top:123px;width:22px;height:24px;background:#fde9ba;border:1px solid #997728"></div>
<svg class="r" style="left:1649px;top:129px;" width="16" height="12" viewBox="0 0 16 12"><path d="M1 8.5H14" stroke="#2b2b2b" stroke-width="1.2"/><rect x="3" y="5.5" width="9" height="3" fill="none" stroke="#2b2b2b" stroke-width="1.1"/><path d="M11 3L12.5 1.5M13 5H15M12 0.5L13 0" stroke="#d8a03a" stroke-width="1"/></svg>
<div class="r" style="left:1394px;top:149px;width:494px;height:21px;background:#ffffff;border:1px solid #8f98b4"></div>
<div class="t" style="left:1399px;top:152.0px;font-size:12.98px;line-height:16px;color:#6d6d6d;font-weight:normal;transform-origin:0 0;transform:scaleX(0.9091);">Search Solution Explorer (Ctrl+;)</div>
<svg class="r" style="left:1859px;top:152px;" width="14" height="14" viewBox="0 0 14 14"><circle cx="8.5" cy="5.5" r="4.2" fill="none" stroke="#555" stroke-width="1.5"/><path d="M5.5 8.5L1 13" stroke="#555" stroke-width="2"/></svg>
<div class="r" style="left:1875px;top:149px;width:1px;height:21px;background:#8f98b4;"></div>
<div class="r" style="left:1876px;top:150px;width:11px;height:19px;background:#f0f3fb;"></div>
<svg class="r" style="left:1878px;top:158px;" width="6" height="4" viewBox="0 0 6 4"><path d="M0 0H6L3 3.5Z" fill="#1e1e1e"/></svg>
<div class="r" style="left:1394px;top:170px;width:494px;height:834px;background:#f7f8fd;"></div>
<div class="r" style="left:1871px;top:170px;width:17px;height:834px;background:#e8e8ec;"></div>
<svg class="r" style="left:1875px;top:178px;" width="9" height="6" viewBox="0 0 9 6"><path d="M0 5H9L4.5 0.5Z" fill="#868999"/></svg>
<div class="r" style="left:1875px;top:189px;width:9px;height:763px;background:#c2c3c9;"></div>
<svg class="r" style="left:1875px;top:993px;" width="9" height="6" viewBox="0 0 9 6"><path d="M0 0.5H9L4.5 5Z" fill="#868999"/></svg>
<div class="r" style="left:1394px;top:286px;width:477px;height:19px;background:#e4e6ee;"></div>
<div class="r" style="left:1394px;top:170px;width:477px;height:834px;overflow:hidden">
<svg class="r" style="left:15px;top:3.5px" width="16" height="16" viewBox="0 0 16 16"><rect x="0.6" y="0.6" width="14" height="13" fill="#f4f4f4" stroke="#2b2b2b" stroke-width="1.1"/><path d="M0.6 3H14.6" stroke="#2b2b2b" stroke-width="1.1"/><path d="M6 8.5L9.5 11.5L13.5 7.5V15L9.5 11.5L6 14.5Z" fill="none" stroke="#8d52d1" stroke-width="1.4"/></svg>
<div class="t" style="left:35px;top:4px;font-size:12.76px;line-height:16px;font-weight:normal;transform-origin:0 0;transform:scaleX(0.9091)">Solution 'TestSP' (3 of 3 projects)</div>
<svg class="r" style="left:10px;top:27px" width="7" height="7" viewBox="0 0 7 7"><path d="M6.6 0.4V6.8H0.2Z" fill="#1e1e1e"/></svg>
<svg class="r" style="left:33px;top:22.5px" width="16" height="16" viewBox="0 0 16 16"><rect x="0.6" y="0.6" width="13" height="13" fill="#f4f4f4" stroke="#2b2b2b" stroke-width="1.1"/><text x="2" y="10" font-family="Liberation Sans" font-weight="bold" font-size="7.5" fill="#1b8a1b">C#</text><path d="M10 6.5L15.5 15.5H4.5Z" fill="#c89b1e"/><path d="M10 9.5V12.5" stroke="#fff" stroke-width="1"/><rect x="9.5" y="13.3" width="1" height="1" fill="#fff"/></svg>
<div class="t" style="left:53px;top:23px;font-size:12.07px;line-height:16px;font-weight:bold;transform-origin:0 0;transform:scaleX(0.9091)">ConsoleApp1</div>
<svg class="r" style="left:28px;top:46px" width="7" height="7" viewBox="0 0 7 7"><path d="M6.6 0.4V6.8H0.2Z" fill="#1e1e1e"/></svg>
<svg class="r" style="left:51px;top:41.5px" width="16" height="16" viewBox="0 0 16 16"><path d="M5.4 5H10.5M3.8 9.5H8.2" stroke="#a0a0a0" stroke-width="1.3"/><rect x="10.9" y="3.1" width="4.6" height="4.8" fill="#e8e8e8" stroke="#666" stroke-width="1"/><rect x="0.7" y="8.1" width="3" height="3" fill="#fff" stroke="#1e1e1e" stroke-width="1"/><rect x="2.9" y="4.2" width="2.5" height="2.5" fill="#fff" stroke="#1e1e1e" stroke-width="1"/><rect x="8.7" y="7.3" width="4.8" height="4.6" fill="#e8e8e8" stroke="#1e1e1e" stroke-width="1.1"/></svg>
<div class="t" style="left:71px;top:42px;font-size:12.76px;line-height:16px;font-weight:normal;transform-origin:0 0;transform:scaleX(0.9091)">Dependencies</div>
<svg class="r" style="left:47px;top:63.5px" width="7" height="10" viewBox="0 0 7 10"><path d="M0.6 0.8L4.9 5L0.6 9.2Z" fill="none" stroke="#1e1e1e" stroke-width="1.1"/></svg>
<svg class="r" style="left:69px;top:60.5px" width="16" height="16" viewBox="0 0 16 16"><path d="M3 2H15M3 5H8M10 5H15M6 8H15" stroke="#2b2b2b" stroke-width="1"/><circle cx="4" cy="11.5" r="3.5" fill="#1e1e1e"/><rect x="3.5" y="10.5" width="1" height="3" fill="#fff"/><rect x="3.5" y="9" width="1" height="1" fill="#fff"/></svg>
<div class="t" style="left:89px;top:61px;font-size:12.76px;line-height:16px;font-weight:normal;transform-origin:0 0;transform:scaleX(0.9091)">Analyzers</div>
<svg class="r" style="left:47px;top:82.5px" width="7" height="10" viewBox="0 0 7 10"><path d="M0.6 0.8L4.9 5L0.6 9.2Z" fill="none" stroke="#1e1e1e" stroke-width="1.1"/></svg>
<svg class="r" style="left:69px;top:79.5px" width="16" height="16" viewBox="0 0 16 16"><path d="M0.5 7.5H4" stroke="#1e1e1e" stroke-width="2"/><rect x="4.6" y="3.6" width="9.8" height="8" fill="none" stroke="#2b2b2b" stroke-width="1.2"/><rect x="6.5" y="5.5" width="3" height="4" fill="#1e1e1e"/><rect x="10.5" y="5.5" width="2" height="1.5" fill="#1e1e1e"/><rect x="10.5" y="8" width="2" height="1.5" fill="#1e1e1e"/></svg>
<div class="t" style="left:89px;top:80px;font-size:12.76px;line-height:16px;font-weight:normal;transform-origin:0 0;transform:scaleX(0.9091)">Frameworks</div>
<svg class="r" style="left:29px;top:101.5px" width="7" height="10" viewBox="0 0 7 10"><path d="M0.6 0.8L4.9 5L0.6 9.2Z" fill="none" stroke="#1e1e1e" stroke-width="1.1"/></svg>
<svg class="r" style="left:51px;top:98.5px" width="16" height="16" viewBox="0 0 16 16"><path d="M1 3H5.5L6.5 4.2H14.5V13.5H1Z" fill="#cfb271" stroke="#a8863a" stroke-width="1"/><path d="M1 5.5H14.5" stroke="#a8863a" stroke-width="1"/><rect x="0.5" y="8.5" width="7" height="7" fill="#f4f4f4" stroke="#2b2b2b" stroke-width="1.1"/><path d="M2.5 13.5L5.5 10.5M3 10.5H5.5V13" fill="none" stroke="#2b2b2b" stroke-width="1"/></svg>
<div class="t" style="left:71px;top:99px;font-size:12.76px;line-height:16px;font-weight:normal;transform-origin:0 0;transform:scaleX(0.9091)">Sample</div>
<svg class="r" style="left:29px;top:120.5px" width="7" height="10" viewBox="0 0 7 10"><path d="M0.6 0.8L4.9 5L0.6 9.2Z" fill="none" stroke="#1e1e1e" stroke-width="1.1"/></svg>
<svg class="r" style="left:51px;top:117.5px" width="16" height="16" viewBox="0 0 16 16"><path d="M7 5.2C6.5 4.4 5.7 4 4.8 4C3 4 1.8 5.5 1.8 7.8C1.8 10.1 3 11.6 4.8 11.6C5.7 11.6 6.5 11.2 7 10.4" fill="none" stroke="#1b8a1b" stroke-width="1.4"/><path d="M9 6H14.5M9 9H14.5M10.8 3.8L10.3 11M13.3 3.8L12.8 11" stroke="#1b8a1b" stroke-width="1"/></svg>
<div class="t" style="left:71px;top:118px;font-size:12.76px;line-height:16px;font-weight:normal;transform-origin:0 0;transform:scaleX(0.9091)">Program.cs</div>
<svg class="r" style="left:10px;top:141px" width="7" height="7" viewBox="0 0 7 7"><path d="M6.6 0.4V6.8H0.2Z" fill="#1e1e1e"/></svg>
<svg class="r" style="left:33px;top:136.5px" width="16" height="16" viewBox="0 0 16 16"><rect x="3.6" y="0.6" width="11" height="12.5" fill="#e9e9ee" stroke="#2b2b2b" stroke-width="1.1"/><path d="M3.6 3H14.6" stroke="#2b2b2b" stroke-width="1.1"/><circle cx="5.2" cy="11" r="4.8" fill="#1e6cc2"/><path d="M0.8 11H9.6M5.2 6.4V15.6M1.6 8.6H8.8M1.6 13.4H8.8" stroke="#f4f4f4" stroke-width="0.8"/><ellipse cx="5.2" cy="11" rx="2.2" ry="4.6" fill="none" stroke="#f4f4f4" stroke-width="0.8"/></svg>
<div class="t" style="left:53px;top:137px;font-size:12.76px;line-height:16px;font-weight:normal;transform-origin:0 0;transform:scaleX(0.9091)">TestSP.Client</div>
<svg class="r" style="left:29px;top:158.5px" width="7" height="10" viewBox="0 0 7 10"><path d="M0.6 0.8L4.9 5L0.6 9.2Z" fill="none" stroke="#1e1e1e" stroke-width="1.1"/></svg>
<svg class="r" style="left:51px;top:155.5px" width="16" height="16" viewBox="0 0 16 16"><path d="M4 10.5C1.5 10.5 0.8 8.8 0.8 7.5C0.8 5.8 2 4.8 3.5 4.8C4 2.5 6 1 8.5 1C11.5 1 13 3 13.2 5C14.8 5.3 15.5 6.5 15.5 7.8C15.5 9.5 14.3 10.5 12.5 10.5" fill="none" stroke="#1e8ab8" stroke-width="1.2"/><path d="M8 7V15M6 5.5V8M10 5.5V8M5.5 8H10.5V10C10.5 11.5 9.5 12 8 12C6.5 12 5.5 11.5 5.5 10Z" fill="none" stroke="#1b8a1b" stroke-width="1.1"/></svg>
<div class="t" style="left:71px;top:156px;font-size:12.76px;line-height:16px;font-weight:normal;transform-origin:0 0;transform:scaleX(0.9091)">Connected Services</div>
<svg class="r" style="left:29px;top:177.5px" width="7" height="10" viewBox="0 0 7 10"><path d="M0.6 0.8L4.9 5L0.6 9.2Z" fill="none" stroke="#1e1e1e" stroke-width="1.1"/></svg>
<svg class="r" style="left:51px;top:174.5px" width="16" height="16" viewBox="0 0 16 16"><path d="M5.4 5H10.5M3.8 9.5H8.2" stroke="#a0a0a0" stroke-width="1.3"/><rect x="10.9" y="3.1" width="4.6" height="4.8" fill="#e8e8e8" stroke="#666" stroke-width="1"/><rect x="0.7" y="8.1" width="3" height="3" fill="#fff" stroke="#1e1e1e" stroke-width="1"/><rect x="2.9" y="4.2" width="2.5" height="2.5" fill="#fff" stroke="#1e1e1e" stroke-width="1"/><rect x="8.7" y="7.3" width="4.8" height="4.6" fill="#e8e8e8" stroke="#1e1e1e" stroke-width="1.1"/></svg>
<div class="t" style="left:71px;top:175px;font-size:12.76px;line-height:16px;font-weight:normal;transform-origin:0 0;transform:scaleX(0.9091)">Dependencies</div>
<svg class="r" style="left:29px;top:196.5px" width="7" height="10" viewBox="0 0 7 10"><path d="M0.6 0.8L4.9 5L0.6 9.2Z" fill="none" stroke="#1e1e1e" stroke-width="1.1"/></svg>
<svg class="r" style="left:51px;top:193.5px" width="16" height="16" viewBox="0 0 16 16"><path d="M1 3H5.5L6.5 4.2H14.5V13.5H1Z" fill="#cfb271" stroke="#a8863a" stroke-width="1"/><path d="M1 5.5H14.5" stroke="#a8863a" stroke-width="1"/><path d="M1.5 8.5L7.5 14.5" stroke="#1e1e1e" stroke-width="2"/><path d="M0.5 7.5C0.5 6 2 5 3.5 5.5L2.5 7L4 8.5L5.5 7.5C6 9 4.5 10.5 3 10" fill="#1e1e1e"/></svg>
<div class="t" style="left:71px;top:194px;font-size:12.76px;line-height:16px;font-weight:normal;transform-origin:0 0;transform:scaleX(0.9091)">Properties</div>
<svg class="r" style="left:29px;top:215.5px" width="7" height="10" viewBox="0 0 7 10"><path d="M0.6 0.8L4.9 5L0.6 9.2Z" fill="none" stroke="#1e1e1e" stroke-width="1.1"/></svg>
<svg class="r" style="left:51px;top:212.5px" width="16" height="16" viewBox="0 0 16 16"><circle cx="8" cy="8" r="7" fill="none" stroke="#1e6cc2" stroke-width="1.3"/><ellipse cx="8" cy="8" rx="3" ry="7" fill="none" stroke="#1e6cc2" stroke-width="1.1"/><path d="M1 8H15M2 4.5H14M2 11.5H14" stroke="#1e6cc2" stroke-width="1.1"/></svg>
<div class="t" style="left:71px;top:213px;font-size:12.76px;line-height:16px;font-weight:normal;transform-origin:0 0;transform:scaleX(0.9091)">wwwroot</div>
<svg class="r" style="left:28px;top:236px" width="7" height="7" viewBox="0 0 7 7"><path d="M6.6 0.4V6.8H0.2Z" fill="#1e1e1e"/></svg>
<svg class="r" style="left:51px;top:231.5px" width="16" height="16" viewBox="0 0 16 16"><path d="M1 3H5.5L6.5 4.2H14.5V13.5H1Z" fill="#cfb271" stroke="#a8863a" stroke-width="1"/><path d="M1 5.5H14.5" stroke="#a8863a" stroke-width="1"/></svg>
<div class="t" style="left:71px;top:232px;font-size:12.76px;line-height:16px;font-weight:normal;transform-origin:0 0;transform:scaleX(0.9091)">Pages</div>
<svg class="r" style="left:69px;top:250.5px" width="16" height="16" viewBox="0 0 16 16"><path d="M5.5 0.6H10.5L13.5 3.5V11.5H5.5Z" fill="#f4f4f4" stroke="#2b2b2b" stroke-width="1.1"/><path d="M2.5 4.6H7.5L10.5 7.5V15.5H2.5Z" fill="#f4f4f4" stroke="#2b2b2b" stroke-width="1.1"/></svg>
<div class="t" style="left:89px;top:251px;font-size:12.76px;line-height:16px;font-weight:normal;transform-origin:0 0;transform:scaleX(0.9091)">Index.de.resx</div>
<svg class="r" style="left:69px;top:269.5px" width="16" height="16" viewBox="0 0 16 16"><path d="M5.5 0.6H10.5L13.5 3.5V11.5H5.5Z" fill="#f4f4f4" stroke="#2b2b2b" stroke-width="1.1"/><path d="M2.5 4.6H7.5L10.5 7.5V15.5H2.5Z" fill="#f4f4f4" stroke="#2b2b2b" stroke-width="1.1"/></svg>
<div class="t" style="left:89px;top:270px;font-size:12.76px;line-height:16px;font-weight:normal;transform-origin:0 0;transform:scaleX(0.9091)">Index.en.resx</div>
<svg class="r" style="left:46px;top:293px" width="7" height="7" viewBox="0 0 7 7"><path d="M6.6 0.4V6.8H0.2Z" fill="#1e1e1e"/></svg>
<svg class="r" style="left:69px;top:288.5px" width="16" height="16" viewBox="0 0 16 16"><path d="M2.6 0.6H10L13.5 4V15.4H2.6Z" fill="#f4f4f4" stroke="#2b2b2b" stroke-width="1.1"/><circle cx="8" cy="9.5" r="2" fill="none" stroke="#1b8a1b" stroke-width="1.1"/><path d="M10 9.5V10.5C10 11.5 11.5 11.5 11.5 10C11.5 6.5 9.5 5.5 8 5.5C5.5 5.5 4.5 7.5 4.5 9.5C4.5 11.5 6 13.5 8 13.5C9 13.5 9.7 13.2 10.2 12.9" fill="none" stroke="#1b8a1b" stroke-width="1.1"/></svg>
<div class="t" style="left:89px;top:289px;font-size:12.76px;line-height:16px;font-weight:normal;transform-origin:0 0;transform:scaleX(0.9091)">Index.razor</div>
<svg class="r" style="left:65px;top:310.5px" width="7" height="10" viewBox="0 0 7 10"><path d="M0.6 0.8L4.9 5L0.6 9.2Z" fill="none" stroke="#1e1e1e" stroke-width="1.1"/></svg>
<svg class="r" style="left:87px;top:307.5px" width="16" height="16" viewBox="0 0 16 16"><path d="M7 5.2C6.5 4.4 5.7 4 4.8 4C3 4 1.8 5.5 1.8 7.8C1.8 10.1 3 11.6 4.8 11.6C5.7 11.6 6.5 11.2 7 10.4" fill="none" stroke="#1b8a1b" stroke-width="1.4"/><path d="M9 6H14.5M9 9H14.5M10.8 3.8L10.3 11M13.3 3.8L12.8 11" stroke="#1b8a1b" stroke-width="1"/></svg>
<div class="t" style="left:107px;top:308px;font-size:12.76px;line-height:16px;font-weight:normal;transform-origin:0 0;transform:scaleX(0.9091)">Index.razor.cs</div>
<svg class="r" style="left:29px;top:329.5px" width="7" height="10" viewBox="0 0 7 10"><path d="M0.6 0.8L4.9 5L0.6 9.2Z" fill="none" stroke="#1e1e1e" stroke-width="1.1"/></svg>
<svg class="r" style="left:51px;top:326.5px" width="16" height="16" viewBox="0 0 16 16"><path d="M1 3H5.5L6.5 4.2H14.5V13.5H1Z" fill="#cfb271" stroke="#a8863a" stroke-width="1"/><path d="M1 5.5H14.5" stroke="#a8863a" stroke-width="1"/><rect x="0.5" y="8.5" width="7" height="7" fill="#f4f4f4" stroke="#2b2b2b" stroke-width="1.1"/><path d="M2.5 13.5L5.5 10.5M3 10.5H5.5V13" fill="none" stroke="#2b2b2b" stroke-width="1"/></svg>
<div class="t" style="left:71px;top:327px;font-size:12.76px;line-height:16px;font-weight:normal;transform-origin:0 0;transform:scaleX(0.9091)">Sample</div>
<svg class="r" style="left:29px;top:348.5px" width="7" height="10" viewBox="0 0 7 10"><path d="M0.6 0.8L4.9 5L0.6 9.2Z" fill="none" stroke="#1e1e1e" stroke-width="1.1"/></svg>
<svg class="r" style="left:51px;top:345.5px" width="16" height="16" viewBox="0 0 16 16"><path d="M1 3H5.5L6.5 4.2H14.5V13.5H1Z" fill="#cfb271" stroke="#a8863a" stroke-width="1"/><path d="M1 5.5H14.5" stroke="#a8863a" stroke-width="1"/></svg>
<div class="t" style="left:71px;top:346px;font-size:12.76px;line-height:16px;font-weight:normal;transform-origin:0 0;transform:scaleX(0.9091)">Services</div>
<svg class="r" style="left:29px;top:367.5px" width="7" height="10" viewBox="0 0 7 10"><path d="M0.6 0.8L4.9 5L0.6 9.2Z" fill="none" stroke="#1e1e1e" stroke-width="1.1"/></svg>
<svg class="r" style="left:51px;top:364.5px" width="16" height="16" viewBox="0 0 16 16"><path d="M1 3H5.5L6.5 4.2H14.5V13.5H1Z" fill="#cfb271" stroke="#a8863a" stroke-width="1"/><path d="M1 5.5H14.5" stroke="#a8863a" stroke-width="1"/></svg>
<div class="t" style="left:71px;top:365px;font-size:12.76px;line-height:16px;font-weight:normal;transform-origin:0 0;transform:scaleX(0.9091)">Shared</div>
<svg class="r" style="left:51px;top:383.5px" width="16" height="16" viewBox="0 0 16 16"><path d="M2.6 0.6H10L13.5 4V15.4H2.6Z" fill="#f4f4f4" stroke="#2b2b2b" stroke-width="1.1"/><circle cx="8" cy="9.5" r="2" fill="none" stroke="#1b8a1b" stroke-width="1.1"/><path d="M10 9.5V10.5C10 11.5 11.5 11.5 11.5 10C11.5 6.5 9.5 5.5 8 5.5C5.5 5.5 4.5 7.5 4.5 9.5C4.5 11.5 6 13.5 8 13.5C9 13.5 9.7 13.2 10.2 12.9" fill="none" stroke="#1b8a1b" stroke-width="1.1"/></svg>
<div class="t" style="left:71px;top:384px;font-size:12.76px;line-height:16px;font-weight:normal;transform-origin:0 0;transform:scaleX(0.9091)">_Imports.razor</div>
<svg class="r" style="left:51px;top:402.5px" width="16" height="16" viewBox="0 0 16 16"><path d="M2.6 0.6H10L13.5 4V15.4H2.6Z" fill="#f4f4f4" stroke="#2b2b2b" stroke-width="1.1"/><circle cx="8" cy="9.5" r="2" fill="none" stroke="#1b8a1b" stroke-width="1.1"/><path d="M10 9.5V10.5C10 11.5 11.5 11.5 11.5 10C11.5 6.5 9.5 5.5 8 5.5C5.5 5.5 4.5 7.5 4.5 9.5C4.5 11.5 6 13.5 8 13.5C9 13.5 9.7 13.2 10.2 12.9" fill="none" stroke="#1b8a1b" stroke-width="1.1"/></svg>
<div class="t" style="left:71px;top:403px;font-size:12.76px;line-height:16px;font-weight:normal;transform-origin:0 0;transform:scaleX(0.9091)">App.razor</div>
<svg class="r" style="left:29px;top:424.5px" width="7" height="10" viewBox="0 0 7 10"><path d="M0.6 0.8L4.9 5L0.6 9.2Z" fill="none" stroke="#1e1e1e" stroke-width="1.1"/></svg>
<svg class="r" style="left:51px;top:421.5px" width="16" height="16" viewBox="0 0 16 16"><path d="M7 5.2C6.5 4.4 5.7 4 4.8 4C3 4 1.8 5.5 1.8 7.8C1.8 10.1 3 11.6 4.8 11.6C5.7 11.6 6.5 11.2 7 10.4" fill="none" stroke="#1b8a1b" stroke-width="1.4"/><path d="M9 6H14.5M9 9H14.5M10.8 3.8L10.3 11M13.3 3.8L12.8 11" stroke="#1b8a1b" stroke-width="1"/></svg>
<div class="t" style="left:71px;top:422px;font-size:12.76px;line-height:16px;font-weight:normal;transform-origin:0 0;transform:scaleX(0.9091)">Program.cs</div>
<svg class="r" style="left:10px;top:445px" width="7" height="7" viewBox="0 0 7 7"><path d="M6.6 0.4V6.8H0.2Z" fill="#1e1e1e"/></svg>
<svg class="r" style="left:33px;top:440.5px" width="16" height="16" viewBox="0 0 16 16"><rect x="3.6" y="0.6" width="11" height="12.5" fill="#e9e9ee" stroke="#2b2b2b" stroke-width="1.1"/><path d="M3.6 3H14.6" stroke="#2b2b2b" stroke-width="1.1"/><circle cx="5.2" cy="11" r="4.8" fill="#1e6cc2"/><path d="M0.8 11H9.6M5.2 6.4V15.6M1.6 8.6H8.8M1.6 13.4H8.8" stroke="#f4f4f4" stroke-width="0.8"/><ellipse cx="5.2" cy="11" rx="2.2" ry="4.6" fill="none" stroke="#f4f4f4" stroke-width="0.8"/></svg>
<div class="t" style="left:53px;top:441px;font-size:12.76px;line-height:16px;font-weight:normal;transform-origin:0 0;transform:scaleX(0.9091)">TestSP.Server</div>
<svg class="r" style="left:29px;top:462.5px" width="7" height="10" viewBox="0 0 7 10"><path d="M0.6 0.8L4.9 5L0.6 9.2Z" fill="none" stroke="#1e1e1e" stroke-width="1.1"/></svg>
<svg class="r" style="left:51px;top:459.5px" width="16" height="16" viewBox="0 0 16 16"><path d="M4 10.5C1.5 10.5 0.8 8.8 0.8 7.5C0.8 5.8 2 4.8 3.5 4.8C4 2.5 6 1 8.5 1C11.5 1 13 3 13.2 5C14.8 5.3 15.5 6.5 15.5 7.8C15.5 9.5 14.3 10.5 12.5 10.5" fill="none" stroke="#1e8ab8" stroke-width="1.2"/><path d="M8 7V15M6 5.5V8M10 5.5V8M5.5 8H10.5V10C10.5 11.5 9.5 12 8 12C6.5 12 5.5 11.5 5.5 10Z" fill="none" stroke="#1b8a1b" stroke-width="1.1"/></svg>
<div class="t" style="left:71px;top:460px;font-size:12.76px;line-height:16px;font-weight:normal;transform-origin:0 0;transform:scaleX(0.9091)">Connected Services</div>
<svg class="r" style="left:29px;top:481.5px" width="7" height="10" viewBox="0 0 7 10"><path d="M0.6 0.8L4.9 5L0.6 9.2Z" fill="none" stroke="#1e1e1e" stroke-width="1.1"/></svg>
<svg class="r" style="left:51px;top:478.5px" width="16" height="16" viewBox="0 0 16 16"><path d="M5.4 5H10.5M3.8 9.5H8.2" stroke="#a0a0a0" stroke-width="1.3"/><rect x="10.9" y="3.1" width="4.6" height="4.8" fill="#e8e8e8" stroke="#666" stroke-width="1"/><rect x="0.7" y="8.1" width="3" height="3" fill="#fff" stroke="#1e1e1e" stroke-width="1"/><rect x="2.9" y="4.2" width="2.5" height="2.5" fill="#fff" stroke="#1e1e1e" stroke-width="1"/><rect x="8.7" y="7.3" width="4.8" height="4.6" fill="#e8e8e8" stroke="#1e1e1e" stroke-width="1.1"/></svg>
<div class="t" style="left:71px;top:479px;font-size:12.76px;line-height:16px;font-weight:normal;transform-origin:0 0;transform:scaleX(0.9091)">Dependencies</div>
<svg class="r" style="left:29px;top:500.5px" width="7" height="10" viewBox="0 0 7 10"><path d="M0.6 0.8L4.9 5L0.6 9.2Z" fill="none" stroke="#1e1e1e" stroke-width="1.1"/></svg>
<svg class="r" style="left:51px;top:497.5px" width="16" height="16" viewBox="0 0 16 16"><path d="M1 3H5.5L6.5 4.2H14.5V13.5H1Z" fill="#cfb271" stroke="#a8863a" stroke-width="1"/><path d="M1 5.5H14.5" stroke="#a8863a" stroke-width="1"/><path d="M1.5 8.5L7.5 14.5" stroke="#1e1e1e" stroke-width="2"/><path d="M0.5 7.5C0.5 6 2 5 3.5 5.5L2.5 7L4 8.5L5.5 7.5C6 9 4.5 10.5 3 10" fill="#1e1e1e"/></svg>
<div class="t" style="left:71px;top:498px;font-size:12.76px;line-height:16px;font-weight:normal;transform-origin:0 0;transform:scaleX(0.9091)">Properties</div>
<svg class="r" style="left:29px;top:519.5px" width="7" height="10" viewBox="0 0 7 10"><path d="M0.6 0.8L4.9 5L0.6 9.2Z" fill="none" stroke="#1e1e1e" stroke-width="1.1"/></svg>
<svg class="r" style="left:51px;top:516.5px" width="16" height="16" viewBox="0 0 16 16"><path d="M1 3H5.5L6.5 4.2H14.5V13.5H1Z" fill="#cfb271" stroke="#a8863a" stroke-width="1"/><path d="M1 5.5H14.5" stroke="#a8863a" stroke-width="1"/></svg>
<div class="t" style="left:71px;top:517px;font-size:12.76px;line-height:16px;font-weight:normal;transform-origin:0 0;transform:scaleX(0.9091)">Controllers</div>
<svg class="r" style="left:28px;top:540px" width="7" height="7" viewBox="0 0 7 7"><path d="M6.6 0.4V6.8H0.2Z" fill="#1e1e1e"/></svg>
<svg class="r" style="left:51px;top:535.5px" width="16" height="16" viewBox="0 0 16 16"><path d="M1 3H5.5L6.5 4.2H14.5V13.5H1Z" fill="#cfb271" stroke="#a8863a" stroke-width="1"/><path d="M1 5.5H14.5" stroke="#a8863a" stroke-width="1"/></svg>
<div class="t" style="left:71px;top:536px;font-size:12.76px;line-height:16px;font-weight:normal;transform-origin:0 0;transform:scaleX(0.9091)">Data</div>
<svg class="r" style="left:47px;top:557.5px" width="7" height="10" viewBox="0 0 7 10"><path d="M0.6 0.8L4.9 5L0.6 9.2Z" fill="none" stroke="#1e1e1e" stroke-width="1.1"/></svg>
<svg class="r" style="left:69px;top:554.5px" width="16" height="16" viewBox="0 0 16 16"><path d="M7 5.2C6.5 4.4 5.7 4 4.8 4C3 4 1.8 5.5 1.8 7.8C1.8 10.1 3 11.6 4.8 11.6C5.7 11.6 6.5 11.2 7 10.4" fill="none" stroke="#1b8a1b" stroke-width="1.4"/><path d="M9 6H14.5M9 9H14.5M10.8 3.8L10.3 11M13.3 3.8L12.8 11" stroke="#1b8a1b" stroke-width="1"/></svg>
<div class="t" style="left:89px;top:555px;font-size:12.76px;line-height:16px;font-weight:normal;transform-origin:0 0;transform:scaleX(0.9091)">BlankTriggerAddingConvention.cs</div>
<svg class="r" style="left:47px;top:576.5px" width="7" height="10" viewBox="0 0 7 10"><path d="M0.6 0.8L4.9 5L0.6 9.2Z" fill="none" stroke="#1e1e1e" stroke-width="1.1"/></svg>
<svg class="r" style="left:69px;top:573.5px" width="16" height="16" viewBox="0 0 16 16"><path d="M7 5.2C6.5 4.4 5.7 4 4.8 4C3 4 1.8 5.5 1.8 7.8C1.8 10.1 3 11.6 4.8 11.6C5.7 11.6 6.5 11.2 7 10.4" fill="none" stroke="#1b8a1b" stroke-width="1.4"/><path d="M9 6H14.5M9 9H14.5M10.8 3.8L10.3 11M13.3 3.8L12.8 11" stroke="#1b8a1b" stroke-width="1"/></svg>
<div class="t" style="left:89px;top:574px;font-size:12.76px;line-height:16px;font-weight:normal;transform-origin:0 0;transform:scaleX(0.9091)">CsvDataContractSerializerOutputFormatter.cs</div>
<svg class="r" style="left:47px;top:595.5px" width="7" height="10" viewBox="0 0 7 10"><path d="M0.6 0.8L4.9 5L0.6 9.2Z" fill="none" stroke="#1e1e1e" stroke-width="1.1"/></svg>
<svg class="r" style="left:69px;top:592.5px" width="16" height="16" viewBox="0 0 16 16"><path d="M7 5.2C6.5 4.4 5.7 4 4.8 4C3 4 1.8 5.5 1.8 7.8C1.8 10.1 3 11.6 4.8 11.6C5.7 11.6 6.5 11.2 7 10.4" fill="none" stroke="#1b8a1b" stroke-width="1.4"/><path d="M9 6H14.5M9 9H14.5M10.8 3.8L10.3 11M13.3 3.8L12.8 11" stroke="#1b8a1b" stroke-width="1"/></svg>
<div class="t" style="left:89px;top:593px;font-size:12.76px;line-height:16px;font-weight:normal;transform-origin:0 0;transform:scaleX(0.9091)">EntityPatch.cs</div>
<svg class="r" style="left:47px;top:614.5px" width="7" height="10" viewBox="0 0 7 10"><path d="M0.6 0.8L4.9 5L0.6 9.2Z" fill="none" stroke="#1e1e1e" stroke-width="1.1"/></svg>
<svg class="r" style="left:69px;top:611.5px" width="16" height="16" viewBox="0 0 16 16"><path d="M7 5.2C6.5 4.4 5.7 4 4.8 4C3 4 1.8 5.5 1.8 7.8C1.8 10.1 3 11.6 4.8 11.6C5.7 11.6 6.5 11.2 7 10.4" fill="none" stroke="#1b8a1b" stroke-width="1.4"/><path d="M9 6H14.5M9 9H14.5M10.8 3.8L10.3 11M13.3 3.8L12.8 11" stroke="#1b8a1b" stroke-width="1"/></svg>
<div class="t" style="left:89px;top:612px;font-size:12.76px;line-height:16px;font-weight:normal;transform-origin:0 0;transform:scaleX(0.9091)">OutputFormatter.cs</div>
<svg class="r" style="left:47px;top:633.5px" width="7" height="10" viewBox="0 0 7 10"><path d="M0.6 0.8L4.9 5L0.6 9.2Z" fill="none" stroke="#1e1e1e" stroke-width="1.1"/></svg>
<svg class="r" style="left:69px;top:630.5px" width="16" height="16" viewBox="0 0 16 16"><path d="M7 5.2C6.5 4.4 5.7 4 4.8 4C3 4 1.8 5.5 1.8 7.8C1.8 10.1 3 11.6 4.8 11.6C5.7 11.6 6.5 11.2 7 10.4" fill="none" stroke="#1b8a1b" stroke-width="1.4"/><path d="M9 6H14.5M9 9H14.5M10.8 3.8L10.3 11M13.3 3.8L12.8 11" stroke="#1b8a1b" stroke-width="1"/></svg>
<div class="t" style="left:89px;top:631px;font-size:12.76px;line-height:16px;font-weight:normal;transform-origin:0 0;transform:scaleX(0.9091)">SampleContext.cs</div>
<svg class="r" style="left:47px;top:652.5px" width="7" height="10" viewBox="0 0 7 10"><path d="M0.6 0.8L4.9 5L0.6 9.2Z" fill="none" stroke="#1e1e1e" stroke-width="1.1"/></svg>
<svg class="r" style="left:69px;top:649.5px" width="16" height="16" viewBox="0 0 16 16"><path d="M7 5.2C6.5 4.4 5.7 4 4.8 4C3 4 1.8 5.5 1.8 7.8C1.8 10.1 3 11.6 4.8 11.6C5.7 11.6 6.5 11.2 7 10.4" fill="none" stroke="#1b8a1b" stroke-width="1.4"/><path d="M9 6H14.5M9 9H14.5M10.8 3.8L10.3 11M13.3 3.8L12.8 11" stroke="#1b8a1b" stroke-width="1"/></svg>
<div class="t" style="left:89px;top:650px;font-size:12.76px;line-height:16px;font-weight:normal;transform-origin:0 0;transform:scaleX(0.9091)">XlsDataContractSerializerOutputFormatter.cs</div>
<svg class="r" style="left:28px;top:673px" width="7" height="7" viewBox="0 0 7 7"><path d="M6.6 0.4V6.8H0.2Z" fill="#1e1e1e"/></svg>
<svg class="r" style="left:51px;top:668.5px" width="16" height="16" viewBox="0 0 16 16"><path d="M1 3H5.5L6.5 4.2H14.5V13.5H1Z" fill="#cfb271" stroke="#a8863a" stroke-width="1"/><path d="M1 5.5H14.5" stroke="#a8863a" stroke-width="1"/></svg>
<div class="t" style="left:71px;top:669px;font-size:12.76px;line-height:16px;font-weight:normal;transform-origin:0 0;transform:scaleX(0.9091)">Models</div>
<svg class="r" style="left:46px;top:692px" width="7" height="7" viewBox="0 0 7 7"><path d="M6.6 0.4V6.8H0.2Z" fill="#1e1e1e"/></svg>
<svg class="r" style="left:69px;top:687.5px" width="16" height="16" viewBox="0 0 16 16"><path d="M1 3H5.5L6.5 4.2H14.5V13.5H1Z" fill="#cfb271" stroke="#a8863a" stroke-width="1"/><path d="M1 5.5H14.5" stroke="#a8863a" stroke-width="1"/></svg>
<div class="t" style="left:89px;top:688px;font-size:12.76px;line-height:16px;font-weight:normal;transform-origin:0 0;transform:scaleX(0.9091)">Sample</div>
<svg class="r" style="left:65px;top:709.5px" width="7" height="10" viewBox="0 0 7 10"><path d="M0.6 0.8L4.9 5L0.6 9.2Z" fill="none" stroke="#1e1e1e" stroke-width="1.1"/></svg>
<svg class="r" style="left:87px;top:706.5px" width="16" height="16" viewBox="0 0 16 16"><path d="M7 5.2C6.5 4.4 5.7 4 4.8 4C3 4 1.8 5.5 1.8 7.8C1.8 10.1 3 11.6 4.8 11.6C5.7 11.6 6.5 11.2 7 10.4" fill="none" stroke="#1b8a1b" stroke-width="1.4"/><path d="M9 6H14.5M9 9H14.5M10.8 3.8L10.3 11M13.3 3.8L12.8 11" stroke="#1b8a1b" stroke-width="1"/></svg>
<div class="t" style="left:107px;top:707px;font-size:12.76px;line-height:16px;font-weight:normal;transform-origin:0 0;transform:scaleX(0.9091)">Order.cs</div>
<svg class="r" style="left:65px;top:728.5px" width="7" height="10" viewBox="0 0 7 10"><path d="M0.6 0.8L4.9 5L0.6 9.2Z" fill="none" stroke="#1e1e1e" stroke-width="1.1"/></svg>
<svg class="r" style="left:87px;top:725.5px" width="16" height="16" viewBox="0 0 16 16"><path d="M7 5.2C6.5 4.4 5.7 4 4.8 4C3 4 1.8 5.5 1.8 7.8C1.8 10.1 3 11.6 4.8 11.6C5.7 11.6 6.5 11.2 7 10.4" fill="none" stroke="#1b8a1b" stroke-width="1.4"/><path d="M9 6H14.5M9 9H14.5M10.8 3.8L10.3 11M13.3 3.8L12.8 11" stroke="#1b8a1b" stroke-width="1"/></svg>
<div class="t" style="left:107px;top:726px;font-size:12.76px;line-height:16px;font-weight:normal;transform-origin:0 0;transform:scaleX(0.9091)">OrderDetail.cs</div>
<svg class="r" style="left:65px;top:747.5px" width="7" height="10" viewBox="0 0 7 10"><path d="M0.6 0.8L4.9 5L0.6 9.2Z" fill="none" stroke="#1e1e1e" stroke-width="1.1"/></svg>
<svg class="r" style="left:87px;top:744.5px" width="16" height="16" viewBox="0 0 16 16"><path d="M7 5.2C6.5 4.4 5.7 4 4.8 4C3 4 1.8 5.5 1.8 7.8C1.8 10.1 3 11.6 4.8 11.6C5.7 11.6 6.5 11.2 7 10.4" fill="none" stroke="#1b8a1b" stroke-width="1.4"/><path d="M9 6H14.5M9 9H14.5M10.8 3.8L10.3 11M13.3 3.8L12.8 11" stroke="#1b8a1b" stroke-width="1"/></svg>
<div class="t" style="left:107px;top:745px;font-size:12.76px;line-height:16px;font-weight:normal;transform-origin:0 0;transform:scaleX(0.9091)">Product.cs</div>
<svg class="r" style="left:65px;top:766.5px" width="7" height="10" viewBox="0 0 7 10"><path d="M0.6 0.8L4.9 5L0.6 9.2Z" fill="none" stroke="#1e1e1e" stroke-width="1.1"/></svg>
<svg class="r" style="left:87px;top:763.5px" width="16" height="16" viewBox="0 0 16 16"><path d="M7 5.2C6.5 4.4 5.7 4 4.8 4C3 4 1.8 5.5 1.8 7.8C1.8 10.1 3 11.6 4.8 11.6C5.7 11.6 6.5 11.2 7 10.4" fill="none" stroke="#1b8a1b" stroke-width="1.4"/><path d="M9 6H14.5M9 9H14.5M10.8 3.8L10.3 11M13.3 3.8L12.8 11" stroke="#1b8a1b" stroke-width="1"/></svg>
<div class="t" style="left:107px;top:764px;font-size:12.76px;line-height:16px;font-weight:normal;transform-origin:0 0;transform:scaleX(0.9091)">PulpdeliveriesAddbatch.cs</div>
<svg class="r" style="left:29px;top:785.5px" width="7" height="10" viewBox="0 0 7 10"><path d="M0.6 0.8L4.9 5L0.6 9.2Z" fill="none" stroke="#1e1e1e" stroke-width="1.1"/></svg>
<svg class="r" style="left:51px;top:782.5px" width="16" height="16" viewBox="0 0 16 16"><path d="M1 3H5.5L6.5 4.2H14.5V13.5H1Z" fill="#cfb271" stroke="#a8863a" stroke-width="1"/><path d="M1 5.5H14.5" stroke="#a8863a" stroke-width="1"/></svg>
<div class="t" style="left:71px;top:783px;font-size:12.76px;line-height:16px;font-weight:normal;transform-origin:0 0;transform:scaleX(0.9091)">Pages</div>
<svg class="r" style="left:29px;top:804.5px" width="7" height="10" viewBox="0 0 7 10"><path d="M0.6 0.8L4.9 5L0.6 9.2Z" fill="none" stroke="#1e1e1e" stroke-width="1.1"/></svg>
<svg class="r" style="left:51px;top:801.5px" width="16" height="16" viewBox="0 0 16 16"><path d="M1 3H5.5L6.5 4.2H14.5V13.5H1Z" fill="#cfb271" stroke="#a8863a" stroke-width="1"/><path d="M1 5.5H14.5" stroke="#a8863a" stroke-width="1"/></svg>
<div class="t" style="left:71px;top:802px;font-size:12.76px;line-height:16px;font-weight:normal;transform-origin:0 0;transform:scaleX(0.9091)">Services</div>
<svg class="r" style="left:29px;top:823.5px" width="7" height="10" viewBox="0 0 7 10"><path d="M0.6 0.8L4.9 5L0.6 9.2Z" fill="none" stroke="#1e1e1e" stroke-width="1.1"/></svg>
<svg class="r" style="left:51px;top:820.5px" width="16" height="16" viewBox="0 0 16 16"><path d="M1.6 0.6H9L12.5 4V15.4H1.6Z" fill="#f4f4f4" stroke="#2b2b2b" stroke-width="1.1"/><path d="M5 6C4 6 4 6.5 4 7.5V9C4 9.5 3.5 10 3 10C3.5 10 4 10.5 4 11V12.5C4 13.5 4 14 5 14M9 6C10 6 10 6.5 10 7.5V9C10 9.5 10.5 10 11 10C10.5 10 10 10.5 10 11V12.5C10 13.5 10 14 9 14" fill="none" stroke="#2b2b2b" stroke-width="1"/></svg>
<div class="t" style="left:71px;top:821px;font-size:12.76px;line-height:16px;font-weight:normal;transform-origin:0 0;transform:scaleX(0.9091)">appsettings.json</div>
</div>
<div class="r" style="left:1394px;top:1004px;width:100px;height:19.5px;background:#f7f8fd;"></div>
<div class="t" style="left:1399px;top:1006.0px;font-size:12.98px;line-height:16px;color:#1e1e1e;font-weight:normal;transform-origin:0 0;transform:scaleX(0.9091);">Solution Explorer</div>
<div class="r" style="left:1496px;top:1005px;width:62.5px;height:17.5px;background:#40558e;"></div>
<div class="t" style="left:1501px;top:1006.0px;font-size:12.98px;line-height:16px;color:#ffffff;font-weight:normal;transform-origin:0 0;transform:scaleX(0.9091);">Properties</div>
<div class="r" style="left:1561px;top:1005px;width:74px;height:17.5px;background:#40558e;"></div>
<div class="t" style="left:1566px;top:1006.0px;font-size:12.98px;line-height:16px;color:#ffffff;font-weight:normal;transform-origin:0 0;transform:scaleX(0.9091);">Git Changes</div>
<div class="r" style="left:1637px;top:1005px;width:86px;height:17.5px;background:#40558e;"></div>
<div class="t" style="left:1642.3px;top:1006.0px;font-size:12.98px;line-height:16px;color:#ffffff;font-weight:normal;transform-origin:0 0;transform:scaleX(0.9091);">Resource View</div>
<div class="r" style="left:0px;top:1056px;width:1920px;height:22px;background:#40508d;"></div>
<div class="r" style="left:0px;top:1078px;width:1920px;height:2px;background:#2b3042;"></div>
<div class="r" style="left:345px;top:1078px;width:44px;height:2px;background:#5a5d6b;"></div>
<div class="r" style="left:389px;top:1078px;width:4px;height:2px;background:#44485a;"></div>
<svg class="r" style="left:3px;top:1059px;" width="18" height="18" viewBox="0 0 18 18"><path d="M1.5 1.5H16.5V13H11.5L9 15.8L6.5 13H1.5Z" fill="none" stroke="#ffffff" stroke-width="1.1"/><path d="M4 4.5H10M4 7H10M4 9.5H10" stroke="#ffffff" stroke-width="0.9"/><path d="M11.5 4.5L12.5 5.5L14.5 3.3M11.5 8L12.5 9L14.5 6.8" fill="none" stroke="#ffffff" stroke-width="0.8"/></svg>
<div class="t" style="left:28.5px;top:1059.5px;font-size:12.27px;line-height:16px;color:#ffffff;font-weight:normal;transform-origin:0 0;transform:scaleX(0.9091);">Item(s) Saved</div>
<svg class="r" style="left:1565px;top:1059px;" width="12" height="16" viewBox="0 0 12 16"><path d="M6 15V1.5M1.5 6L6 1.5L10.5 6" fill="none" stroke="#ffffff" stroke-width="1.1"/></svg>
<div class="t" style="left:1587px;top:1059.5px;font-size:13.20px;line-height:16px;color:#ffffff;font-weight:normal;transform-origin:0 0;transform:scaleX(0.9091);">Add to Source Control</div>
<svg class="r" style="left:1711px;top:1065px;" width="8" height="5" viewBox="0 0 8 5"><path d="M0 4.5H8L4 0.5Z" fill="#ffffff"/></svg>
<svg class="r" style="left:1741px;top:1059px;" width="15" height="16" viewBox="0 0 15 16"><rect x="1.6" y="3.6" width="11.8" height="10.8" fill="none" stroke="#ffffff" stroke-width="1.1"/><path d="M0.5 1.5H14.5M5 6V12M10 6V12M5 9H10" stroke="#ffffff" stroke-width="1.1"/></svg>
<div class="t" style="left:1763px;top:1059.5px;font-size:12.61px;line-height:16px;color:#ffffff;font-weight:normal;transform-origin:0 0;transform:scaleX(0.9091);">Select Repository</div>
<svg class="r" style="left:1859px;top:1065px;" width="8" height="5" viewBox="0 0 8 5"><path d="M0 4.5H8L4 0.5Z" fill="#ffffff"/></svg>
<svg class="r" style="left:1886px;top:1058px;" width="24" height="20" viewBox="0 0 24 20"><path d="M3 13.5C4 12.5 4.5 11.5 4.5 9V7.5C4.5 4.5 6.5 2 9 2C11.5 2 13.5 4.5 13.5 7.5V9C13.5 11.5 14 12.5 15 13.5Z" fill="none" stroke="#ffffff" stroke-width="1.1"/><path d="M7.5 15.5C8 16.3 10 16.3 10.5 15.5" fill="none" stroke="#ffffff" stroke-width="1"/><circle cx="16" cy="13" r="5.9" fill="#e51400"/><path d="M14.6 10.8L16.4 9.6V16.5M14.8 16.5H18" fill="none" stroke="#fff" stroke-width="1.3"/></svg>
</body></html>
